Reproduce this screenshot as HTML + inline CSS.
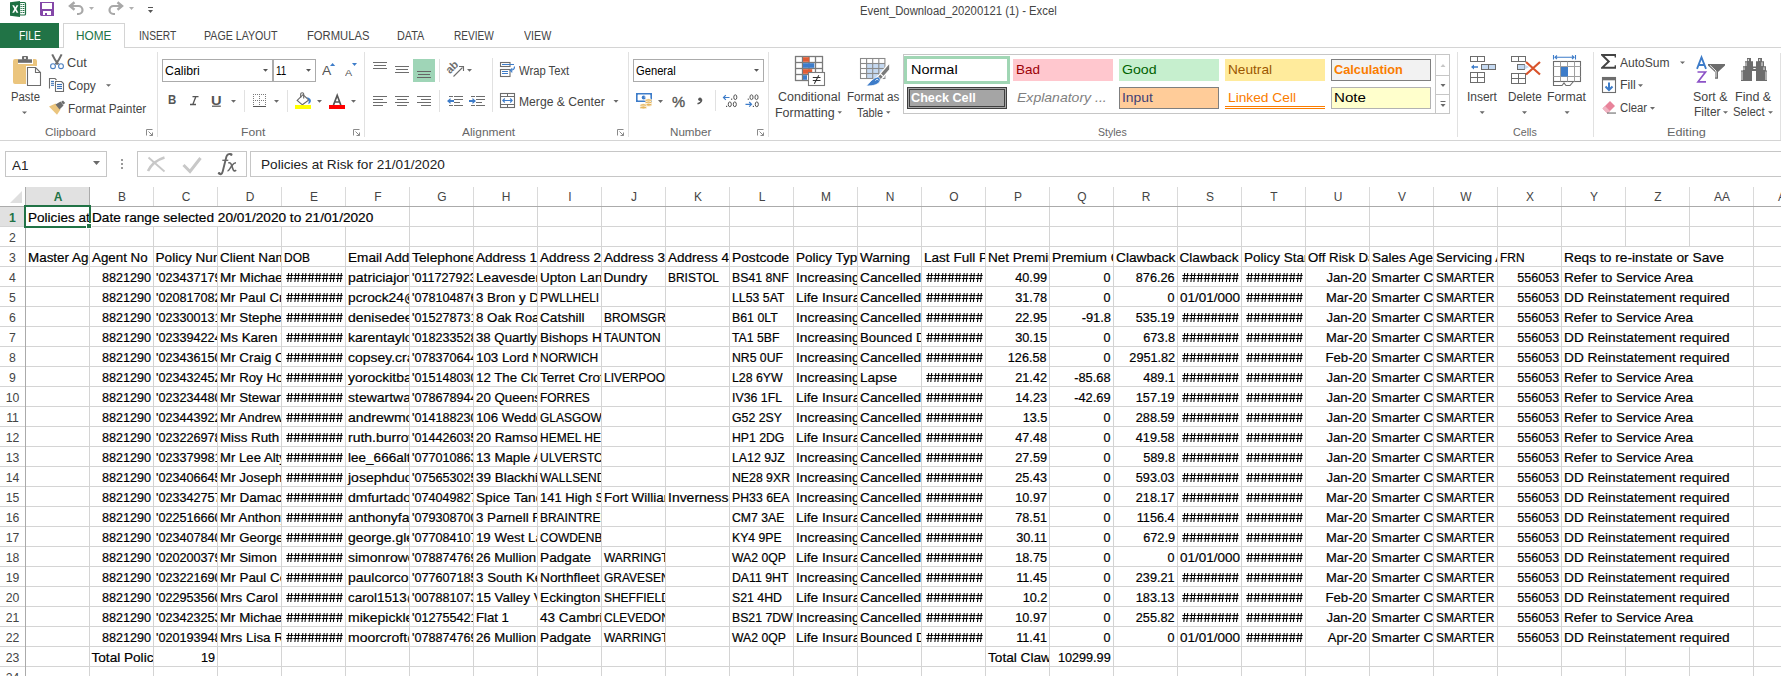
<!DOCTYPE html>
<html><head><meta charset="utf-8"><title>Excel</title><style>
*{margin:0;padding:0;box-sizing:border-box}
html,body{width:1781px;height:676px;overflow:hidden;background:#fff}
body{position:relative;font-family:"Liberation Sans",sans-serif}
.a{position:absolute}
.t{position:absolute;white-space:pre;line-height:1;transform-origin:0 0}
.c{position:absolute;height:19px;overflow:hidden;background:#fff;font-size:13.6px;color:#000;-webkit-text-stroke:0.2px #000}
.r{transform-origin:100% 0}
.hs{letter-spacing:-0.55px}
</style></head>
<body>
<svg class="a" width="0" height="0" style="left:0;top:0"><defs><path id="hh" d="M2.70 6L1.80 15M5.70 6L4.80 15M0.40 8.5H7.00M0.20 11.5H6.50M9.80 6L8.90 15M12.80 6L11.90 15M7.50 8.5H14.10M7.30 11.5H13.60M16.90 6L16.00 15M19.90 6L19.00 15M14.60 8.5H21.20M14.40 11.5H20.70M24.00 6L23.10 15M27.00 6L26.10 15M21.70 8.5H28.30M21.50 11.5H27.80M31.10 6L30.20 15M34.10 6L33.20 15M28.80 8.5H35.40M28.60 11.5H34.90M38.20 6L37.30 15M41.20 6L40.30 15M35.90 8.5H42.50M35.70 11.5H42.00M45.30 6L44.40 15M48.30 6L47.40 15M43.00 8.5H49.60M42.80 11.5H49.10M52.40 6L51.50 15M55.40 6L54.50 15M50.10 8.5H56.70M49.90 11.5H56.20" stroke="#000" stroke-width="1.05" fill="none"/></defs></svg><div class="a" style="left:89px;top:207px;width:1px;height:469px;background:#d4d4d4"></div><div class="a" style="left:153px;top:207px;width:1px;height:469px;background:#d4d4d4"></div><div class="a" style="left:217px;top:207px;width:1px;height:469px;background:#d4d4d4"></div><div class="a" style="left:281px;top:207px;width:1px;height:469px;background:#d4d4d4"></div><div class="a" style="left:345px;top:207px;width:1px;height:469px;background:#d4d4d4"></div><div class="a" style="left:409px;top:207px;width:1px;height:469px;background:#d4d4d4"></div><div class="a" style="left:473px;top:207px;width:1px;height:469px;background:#d4d4d4"></div><div class="a" style="left:537px;top:207px;width:1px;height:469px;background:#d4d4d4"></div><div class="a" style="left:601px;top:207px;width:1px;height:469px;background:#d4d4d4"></div><div class="a" style="left:665px;top:207px;width:1px;height:469px;background:#d4d4d4"></div><div class="a" style="left:729px;top:207px;width:1px;height:469px;background:#d4d4d4"></div><div class="a" style="left:793px;top:207px;width:1px;height:469px;background:#d4d4d4"></div><div class="a" style="left:857px;top:207px;width:1px;height:469px;background:#d4d4d4"></div><div class="a" style="left:921px;top:207px;width:1px;height:469px;background:#d4d4d4"></div><div class="a" style="left:985px;top:207px;width:1px;height:469px;background:#d4d4d4"></div><div class="a" style="left:1049px;top:207px;width:1px;height:469px;background:#d4d4d4"></div><div class="a" style="left:1113px;top:207px;width:1px;height:469px;background:#d4d4d4"></div><div class="a" style="left:1177px;top:207px;width:1px;height:469px;background:#d4d4d4"></div><div class="a" style="left:1241px;top:207px;width:1px;height:469px;background:#d4d4d4"></div><div class="a" style="left:1305px;top:207px;width:1px;height:469px;background:#d4d4d4"></div><div class="a" style="left:1369px;top:207px;width:1px;height:469px;background:#d4d4d4"></div><div class="a" style="left:1433px;top:207px;width:1px;height:469px;background:#d4d4d4"></div><div class="a" style="left:1497px;top:207px;width:1px;height:469px;background:#d4d4d4"></div><div class="a" style="left:1561px;top:207px;width:1px;height:469px;background:#d4d4d4"></div><div class="a" style="left:1625px;top:207px;width:1px;height:469px;background:#d4d4d4"></div><div class="a" style="left:1689px;top:207px;width:1px;height:469px;background:#d4d4d4"></div><div class="a" style="left:1753px;top:207px;width:1px;height:469px;background:#d4d4d4"></div><div class="a" style="left:26px;top:226px;width:1755px;height:1px;background:#d4d4d4"></div><div class="a" style="left:26px;top:246px;width:1755px;height:1px;background:#d4d4d4"></div><div class="a" style="left:26px;top:266px;width:1755px;height:1px;background:#d4d4d4"></div><div class="a" style="left:26px;top:286px;width:1755px;height:1px;background:#d4d4d4"></div><div class="a" style="left:26px;top:306px;width:1755px;height:1px;background:#d4d4d4"></div><div class="a" style="left:26px;top:326px;width:1755px;height:1px;background:#d4d4d4"></div><div class="a" style="left:26px;top:346px;width:1755px;height:1px;background:#d4d4d4"></div><div class="a" style="left:26px;top:366px;width:1755px;height:1px;background:#d4d4d4"></div><div class="a" style="left:26px;top:386px;width:1755px;height:1px;background:#d4d4d4"></div><div class="a" style="left:26px;top:406px;width:1755px;height:1px;background:#d4d4d4"></div><div class="a" style="left:26px;top:426px;width:1755px;height:1px;background:#d4d4d4"></div><div class="a" style="left:26px;top:446px;width:1755px;height:1px;background:#d4d4d4"></div><div class="a" style="left:26px;top:466px;width:1755px;height:1px;background:#d4d4d4"></div><div class="a" style="left:26px;top:486px;width:1755px;height:1px;background:#d4d4d4"></div><div class="a" style="left:26px;top:506px;width:1755px;height:1px;background:#d4d4d4"></div><div class="a" style="left:26px;top:526px;width:1755px;height:1px;background:#d4d4d4"></div><div class="a" style="left:26px;top:546px;width:1755px;height:1px;background:#d4d4d4"></div><div class="a" style="left:26px;top:566px;width:1755px;height:1px;background:#d4d4d4"></div><div class="a" style="left:26px;top:586px;width:1755px;height:1px;background:#d4d4d4"></div><div class="a" style="left:26px;top:606px;width:1755px;height:1px;background:#d4d4d4"></div><div class="a" style="left:26px;top:626px;width:1755px;height:1px;background:#d4d4d4"></div><div class="a" style="left:26px;top:646px;width:1755px;height:1px;background:#d4d4d4"></div><div class="a" style="left:26px;top:666px;width:1755px;height:1px;background:#d4d4d4"></div><div class="a" style="left:26px;top:686px;width:1755px;height:1px;background:#d4d4d4"></div><div class="c" style="left:26px;top:207px;width:63px"><span class="t" style="left:1.5px;top:4.48px;transform:scaleX(0.997)">Policies at Risk for 21/01/2020</span></div><div class="c" style="left:90px;top:207px;width:319px"><span class="t" style="left:1.5px;top:4.48px;transform:scaleX(1.003)">Date range selected 20/01/2020 to 21/01/2020</span></div><div class="c" style="left:26px;top:247px;width:63px"><span class="t" style="left:1.5px;top:4.48px;transform:scaleX(0.987)">Master Agent No</span></div><div class="c" style="left:90px;top:247px;width:63px"><span class="t" style="left:1.5px;top:4.48px;transform:scaleX(0.981)">Agent No</span></div><div class="c" style="left:154px;top:247px;width:63px"><span class="t" style="left:1.5px;top:4.48px;transform:scaleX(1.000)">Policy Number</span></div><div class="c" style="left:218px;top:247px;width:63px"><span class="t" style="left:1.5px;top:4.48px;transform:scaleX(0.993)">Client Name</span></div><div class="c" style="left:282px;top:247px;width:63px"><span class="t" style="left:1.5px;top:4.48px;transform:scaleX(0.880)">DOB</span></div><div class="c" style="left:346px;top:247px;width:63px"><span class="t" style="left:1.5px;top:4.48px;transform:scaleX(1.001)">Email Address</span></div><div class="c" style="left:410px;top:247px;width:63px"><span class="t" style="left:1.5px;top:4.48px;transform:scaleX(1.015)">Telephone</span></div><div class="c" style="left:474px;top:247px;width:63px"><span class="t" style="left:1.5px;top:4.48px;transform:scaleX(0.996)">Address 1</span></div><div class="c" style="left:538px;top:247px;width:63px"><span class="t" style="left:1.5px;top:4.48px;transform:scaleX(0.996)">Address 2</span></div><div class="c" style="left:602px;top:247px;width:63px"><span class="t" style="left:1.5px;top:4.48px;transform:scaleX(0.996)">Address 3</span></div><div class="c" style="left:666px;top:247px;width:63px"><span class="t" style="left:1.5px;top:4.48px;transform:scaleX(0.996)">Address 4</span></div><div class="c" style="left:730px;top:247px;width:63px"><span class="t" style="left:1.5px;top:4.48px;transform:scaleX(1.010)">Postcode</span></div><div class="c" style="left:794px;top:247px;width:63px"><span class="t" style="left:1.5px;top:4.48px;transform:scaleX(0.995)">Policy Type</span></div><div class="c" style="left:858px;top:247px;width:63px"><span class="t" style="left:1.5px;top:4.48px;transform:scaleX(0.996)">Warning</span></div><div class="c" style="left:922px;top:247px;width:63px"><span class="t" style="left:1.5px;top:4.48px;transform:scaleX(0.997)">Last Full Payment</span></div><div class="c" style="left:986px;top:247px;width:63px"><span class="t" style="left:1.5px;top:4.48px;transform:scaleX(0.996)">Net Premium</span></div><div class="c" style="left:1050px;top:247px;width:63px"><span class="t" style="left:1.5px;top:4.48px;transform:scaleX(1.009)">Premium Clawback</span></div><div class="c" style="left:1114px;top:247px;width:63px"><span class="t" style="left:1.5px;top:4.48px;transform:scaleX(1.009)">Clawback</span></div><div class="c" style="left:1178px;top:247px;width:63px"><span class="t" style="left:1.5px;top:4.48px;transform:scaleX(1.000)">Clawback Date</span></div><div class="c" style="left:1242px;top:247px;width:63px"><span class="t" style="left:1.5px;top:4.48px;transform:scaleX(0.992)">Policy Start</span></div><div class="c" style="left:1306px;top:247px;width:63px"><span class="t" style="left:1.5px;top:4.48px;transform:scaleX(0.974)">Off Risk Date</span></div><div class="c" style="left:1370px;top:247px;width:63px"><span class="t" style="left:1.5px;top:4.48px;transform:scaleX(0.995)">Sales Agent</span></div><div class="c" style="left:1434px;top:247px;width:63px"><span class="t" style="left:1.5px;top:4.48px;transform:scaleX(1.004)">Servicing Agent</span></div><div class="c" style="left:1498px;top:247px;width:63px"><span class="t" style="left:1.5px;top:4.48px;transform:scaleX(0.880)">FRN</span></div><div class="c" style="left:1562px;top:247px;width:191px"><span class="t" style="left:1.5px;top:4.48px;transform:scaleX(1.012)">Reqs to re-instate or Save</span></div><div class="c" style="left:90px;top:267px;width:63px"><span class="t r" style="right:2px;top:4.48px;transform:scaleX(0.926)">8821290</span></div><div class="c" style="left:154px;top:267px;width:63px"><span class="t" style="left:1.5px;top:4.48px;transform:scaleX(0.929)">&#x27;023437179</span></div><div class="c" style="left:218px;top:267px;width:63px"><span class="t" style="left:1.5px;top:4.48px;transform:scaleX(0.990)">Mr Michael Jones</span></div><svg class="a" style="left:286px;top:267px" width="59" height="19"><use href="#hh"/></svg><div class="c" style="left:346px;top:267px;width:63px"><span class="t" style="left:1.5px;top:4.48px;transform:scaleX(1.030)">patriciajones@</span></div><div class="c" style="left:410px;top:267px;width:63px"><span class="t" style="left:1.5px;top:4.48px;transform:scaleX(0.929)">&#x27;011727923</span></div><div class="c" style="left:474px;top:267px;width:63px"><span class="t" style="left:1.5px;top:4.48px;transform:scaleX(1.008)">Leavesden Road</span></div><div class="c" style="left:538px;top:267px;width:63px"><span class="t" style="left:1.5px;top:4.48px;transform:scaleX(0.995)">Upton Lane</span></div><div class="c" style="left:602px;top:267px;width:63px"><span class="t" style="left:1.5px;top:4.48px;transform:scaleX(1.000)">Dundry</span></div><div class="c" style="left:666px;top:267px;width:63px"><span class="t" style="left:1.5px;top:4.48px;transform:scaleX(0.880)">BRISTOL</span></div><div class="c" style="left:730px;top:267px;width:63px"><span class="t" style="left:1.5px;top:4.48px;transform:scaleX(0.904)">BS41 8NF</span></div><div class="c" style="left:794px;top:267px;width:63px"><span class="t" style="left:1.5px;top:4.48px;transform:scaleX(1.015)">Increasing Term</span></div><div class="c" style="left:858px;top:267px;width:63px"><span class="t" style="left:1.5px;top:4.48px;transform:scaleX(1.010)">Cancelled</span></div><svg class="a" style="left:926px;top:267px" width="59" height="19"><use href="#hh"/></svg><div class="c" style="left:986px;top:267px;width:63px"><span class="t r" style="right:2px;top:4.48px;transform:scaleX(0.934)">40.99</span></div><div class="c" style="left:1050px;top:267px;width:63px"><span class="t r" style="right:2px;top:4.48px;transform:scaleX(0.926)">0</span></div><div class="c" style="left:1114px;top:267px;width:63px"><span class="t r" style="right:2px;top:4.48px;transform:scaleX(0.933)">876.26</span></div><svg class="a" style="left:1182px;top:267px" width="59" height="19"><use href="#hh"/></svg><svg class="a" style="left:1246px;top:267px" width="59" height="19"><use href="#hh"/></svg><div class="c" style="left:1306px;top:267px;width:63px"><span class="t r" style="right:2px;top:4.48px;transform:scaleX(0.966)">Jan-20</span></div><div class="c" style="left:1370px;top:267px;width:63px"><span class="t" style="left:1.5px;top:4.48px;transform:scaleX(1.000)">Smarter Cover</span></div><div class="c" style="left:1434px;top:267px;width:63px"><span class="t" style="left:1.5px;top:4.48px;transform:scaleX(0.880)">SMARTER</span></div><div class="c" style="left:1498px;top:267px;width:63px"><span class="t r" style="right:2px;top:4.48px;transform:scaleX(0.926)">556053</span></div><div class="c" style="left:1562px;top:267px;width:191px"><span class="t" style="left:1.5px;top:4.48px;transform:scaleX(0.999)">Refer to Service Area</span></div><div class="c" style="left:90px;top:287px;width:63px"><span class="t r" style="right:2px;top:4.48px;transform:scaleX(0.926)">8821290</span></div><div class="c" style="left:154px;top:287px;width:63px"><span class="t" style="left:1.5px;top:4.48px;transform:scaleX(0.929)">&#x27;020817082</span></div><div class="c" style="left:218px;top:287px;width:63px"><span class="t" style="left:1.5px;top:4.48px;transform:scaleX(0.978)">Mr Paul Crock</span></div><svg class="a" style="left:286px;top:287px" width="59" height="19"><use href="#hh"/></svg><div class="c" style="left:346px;top:287px;width:63px"><span class="t" style="left:1.5px;top:4.48px;transform:scaleX(1.014)">pcrock24@gmail</span></div><div class="c" style="left:410px;top:287px;width:63px"><span class="t" style="left:1.5px;top:4.48px;transform:scaleX(0.929)">&#x27;078104876</span></div><div class="c" style="left:474px;top:287px;width:63px"><span class="t" style="left:1.5px;top:4.48px;transform:scaleX(0.981)">3 Bron y Dre</span></div><div class="c" style="left:538px;top:287px;width:63px"><span class="t" style="left:1.5px;top:4.48px;transform:scaleX(0.880)">PWLLHELI</span></div><div class="c" style="left:730px;top:287px;width:63px"><span class="t" style="left:1.5px;top:4.48px;transform:scaleX(0.905)">LL53 5AT</span></div><div class="c" style="left:794px;top:287px;width:63px"><span class="t" style="left:1.5px;top:4.48px;transform:scaleX(1.013)">Life Insurance</span></div><div class="c" style="left:858px;top:287px;width:63px"><span class="t" style="left:1.5px;top:4.48px;transform:scaleX(1.010)">Cancelled</span></div><svg class="a" style="left:926px;top:287px" width="59" height="19"><use href="#hh"/></svg><div class="c" style="left:986px;top:287px;width:63px"><span class="t r" style="right:2px;top:4.48px;transform:scaleX(0.934)">31.78</span></div><div class="c" style="left:1050px;top:287px;width:63px"><span class="t r" style="right:2px;top:4.48px;transform:scaleX(0.926)">0</span></div><div class="c" style="left:1114px;top:287px;width:63px"><span class="t r" style="right:2px;top:4.48px;transform:scaleX(0.926)">0</span></div><div class="c" style="left:1178px;top:287px;width:63px"><span class="t" style="left:1.5px;top:4.48px;transform:scaleX(0.991)">01/01/000</span></div><svg class="a" style="left:1246px;top:287px" width="59" height="19"><use href="#hh"/></svg><div class="c" style="left:1306px;top:287px;width:63px"><span class="t r" style="right:2px;top:4.48px;transform:scaleX(0.952)">Mar-20</span></div><div class="c" style="left:1370px;top:287px;width:63px"><span class="t" style="left:1.5px;top:4.48px;transform:scaleX(1.000)">Smarter Cover</span></div><div class="c" style="left:1434px;top:287px;width:63px"><span class="t" style="left:1.5px;top:4.48px;transform:scaleX(0.880)">SMARTER</span></div><div class="c" style="left:1498px;top:287px;width:63px"><span class="t r" style="right:2px;top:4.48px;transform:scaleX(0.926)">556053</span></div><div class="c" style="left:1562px;top:287px;width:191px"><span class="t" style="left:1.5px;top:4.48px;transform:scaleX(1.006)">DD Reinstatement required</span></div><div class="c" style="left:90px;top:307px;width:63px"><span class="t r" style="right:2px;top:4.48px;transform:scaleX(0.926)">8821290</span></div><div class="c" style="left:154px;top:307px;width:63px"><span class="t" style="left:1.5px;top:4.48px;transform:scaleX(0.929)">&#x27;023300131</span></div><div class="c" style="left:218px;top:307px;width:63px"><span class="t" style="left:1.5px;top:4.48px;transform:scaleX(0.985)">Mr Stephen Dee</span></div><svg class="a" style="left:286px;top:307px" width="59" height="19"><use href="#hh"/></svg><div class="c" style="left:346px;top:307px;width:63px"><span class="t" style="left:1.5px;top:4.48px;transform:scaleX(1.029)">denisedee@</span></div><div class="c" style="left:410px;top:307px;width:63px"><span class="t" style="left:1.5px;top:4.48px;transform:scaleX(0.929)">&#x27;015278731</span></div><div class="c" style="left:474px;top:307px;width:63px"><span class="t" style="left:1.5px;top:4.48px;transform:scaleX(0.976)">8 Oak Road</span></div><div class="c" style="left:538px;top:307px;width:63px"><span class="t" style="left:1.5px;top:4.48px;transform:scaleX(1.001)">Catshill</span></div><div class="c" style="left:602px;top:307px;width:63px"><span class="t" style="left:1.5px;top:4.48px;transform:scaleX(0.880)">BROMSGROVE</span></div><div class="c" style="left:730px;top:307px;width:63px"><span class="t" style="left:1.5px;top:4.48px;transform:scaleX(0.909)">B61 0LT</span></div><div class="c" style="left:794px;top:307px;width:63px"><span class="t" style="left:1.5px;top:4.48px;transform:scaleX(1.015)">Increasing Term</span></div><div class="c" style="left:858px;top:307px;width:63px"><span class="t" style="left:1.5px;top:4.48px;transform:scaleX(1.010)">Cancelled</span></div><svg class="a" style="left:926px;top:307px" width="59" height="19"><use href="#hh"/></svg><div class="c" style="left:986px;top:307px;width:63px"><span class="t r" style="right:2px;top:4.48px;transform:scaleX(0.934)">22.95</span></div><div class="c" style="left:1050px;top:307px;width:63px"><span class="t r" style="right:2px;top:4.48px;transform:scaleX(0.946)">-91.8</span></div><div class="c" style="left:1114px;top:307px;width:63px"><span class="t r" style="right:2px;top:4.48px;transform:scaleX(0.933)">535.19</span></div><svg class="a" style="left:1182px;top:307px" width="59" height="19"><use href="#hh"/></svg><svg class="a" style="left:1246px;top:307px" width="59" height="19"><use href="#hh"/></svg><div class="c" style="left:1306px;top:307px;width:63px"><span class="t r" style="right:2px;top:4.48px;transform:scaleX(0.966)">Jan-20</span></div><div class="c" style="left:1370px;top:307px;width:63px"><span class="t" style="left:1.5px;top:4.48px;transform:scaleX(1.000)">Smarter Cover</span></div><div class="c" style="left:1434px;top:307px;width:63px"><span class="t" style="left:1.5px;top:4.48px;transform:scaleX(0.880)">SMARTER</span></div><div class="c" style="left:1498px;top:307px;width:63px"><span class="t r" style="right:2px;top:4.48px;transform:scaleX(0.926)">556053</span></div><div class="c" style="left:1562px;top:307px;width:191px"><span class="t" style="left:1.5px;top:4.48px;transform:scaleX(0.999)">Refer to Service Area</span></div><div class="c" style="left:90px;top:327px;width:63px"><span class="t r" style="right:2px;top:4.48px;transform:scaleX(0.926)">8821290</span></div><div class="c" style="left:154px;top:327px;width:63px"><span class="t" style="left:1.5px;top:4.48px;transform:scaleX(0.929)">&#x27;023394224</span></div><div class="c" style="left:218px;top:327px;width:63px"><span class="t" style="left:1.5px;top:4.48px;transform:scaleX(0.988)">Ms Karen Taylor</span></div><svg class="a" style="left:286px;top:327px" width="59" height="19"><use href="#hh"/></svg><div class="c" style="left:346px;top:327px;width:63px"><span class="t" style="left:1.5px;top:4.48px;transform:scaleX(1.029)">karentaylor@</span></div><div class="c" style="left:410px;top:327px;width:63px"><span class="t" style="left:1.5px;top:4.48px;transform:scaleX(0.929)">&#x27;018233528</span></div><div class="c" style="left:474px;top:327px;width:63px"><span class="t" style="left:1.5px;top:4.48px;transform:scaleX(0.972)">38 Quartly Dr</span></div><div class="c" style="left:538px;top:327px;width:63px"><span class="t" style="left:1.5px;top:4.48px;transform:scaleX(0.995)">Bishops Hull</span></div><div class="c" style="left:602px;top:327px;width:63px"><span class="t" style="left:1.5px;top:4.48px;transform:scaleX(0.880)">TAUNTON</span></div><div class="c" style="left:730px;top:327px;width:63px"><span class="t" style="left:1.5px;top:4.48px;transform:scaleX(0.901)">TA1 5BF</span></div><div class="c" style="left:794px;top:327px;width:63px"><span class="t" style="left:1.5px;top:4.48px;transform:scaleX(1.015)">Increasing Term</span></div><div class="c" style="left:858px;top:327px;width:63px"><span class="t" style="left:1.5px;top:4.48px;transform:scaleX(0.976)">Bounced DD</span></div><svg class="a" style="left:926px;top:327px" width="59" height="19"><use href="#hh"/></svg><div class="c" style="left:986px;top:327px;width:63px"><span class="t r" style="right:2px;top:4.48px;transform:scaleX(0.934)">30.15</span></div><div class="c" style="left:1050px;top:327px;width:63px"><span class="t r" style="right:2px;top:4.48px;transform:scaleX(0.926)">0</span></div><div class="c" style="left:1114px;top:327px;width:63px"><span class="t r" style="right:2px;top:4.48px;transform:scaleX(0.934)">673.8</span></div><svg class="a" style="left:1182px;top:327px" width="59" height="19"><use href="#hh"/></svg><svg class="a" style="left:1246px;top:327px" width="59" height="19"><use href="#hh"/></svg><div class="c" style="left:1306px;top:327px;width:63px"><span class="t r" style="right:2px;top:4.48px;transform:scaleX(0.952)">Mar-20</span></div><div class="c" style="left:1370px;top:327px;width:63px"><span class="t" style="left:1.5px;top:4.48px;transform:scaleX(1.000)">Smarter Cover</span></div><div class="c" style="left:1434px;top:327px;width:63px"><span class="t" style="left:1.5px;top:4.48px;transform:scaleX(0.880)">SMARTER</span></div><div class="c" style="left:1498px;top:327px;width:63px"><span class="t r" style="right:2px;top:4.48px;transform:scaleX(0.926)">556053</span></div><div class="c" style="left:1562px;top:327px;width:191px"><span class="t" style="left:1.5px;top:4.48px;transform:scaleX(1.006)">DD Reinstatement required</span></div><div class="c" style="left:90px;top:347px;width:63px"><span class="t r" style="right:2px;top:4.48px;transform:scaleX(0.926)">8821290</span></div><div class="c" style="left:154px;top:347px;width:63px"><span class="t" style="left:1.5px;top:4.48px;transform:scaleX(0.929)">&#x27;023436150</span></div><div class="c" style="left:218px;top:347px;width:63px"><span class="t" style="left:1.5px;top:4.48px;transform:scaleX(0.985)">Mr Craig Copsey</span></div><svg class="a" style="left:286px;top:347px" width="59" height="19"><use href="#hh"/></svg><div class="c" style="left:346px;top:347px;width:63px"><span class="t" style="left:1.5px;top:4.48px;transform:scaleX(1.028)">copsey.craig@</span></div><div class="c" style="left:410px;top:347px;width:63px"><span class="t" style="left:1.5px;top:4.48px;transform:scaleX(0.929)">&#x27;078370644</span></div><div class="c" style="left:474px;top:347px;width:63px"><span class="t" style="left:1.5px;top:4.48px;transform:scaleX(0.981)">103 Lord Nelson</span></div><div class="c" style="left:538px;top:347px;width:63px"><span class="t" style="left:1.5px;top:4.48px;transform:scaleX(0.880)">NORWICH</span></div><div class="c" style="left:730px;top:347px;width:63px"><span class="t" style="left:1.5px;top:4.48px;transform:scaleX(0.900)">NR5 0UF</span></div><div class="c" style="left:794px;top:347px;width:63px"><span class="t" style="left:1.5px;top:4.48px;transform:scaleX(1.015)">Increasing Term</span></div><div class="c" style="left:858px;top:347px;width:63px"><span class="t" style="left:1.5px;top:4.48px;transform:scaleX(1.010)">Cancelled</span></div><svg class="a" style="left:926px;top:347px" width="59" height="19"><use href="#hh"/></svg><div class="c" style="left:986px;top:347px;width:63px"><span class="t r" style="right:2px;top:4.48px;transform:scaleX(0.933)">126.58</span></div><div class="c" style="left:1050px;top:347px;width:63px"><span class="t r" style="right:2px;top:4.48px;transform:scaleX(0.926)">0</span></div><div class="c" style="left:1114px;top:347px;width:63px"><span class="t r" style="right:2px;top:4.48px;transform:scaleX(0.932)">2951.82</span></div><svg class="a" style="left:1182px;top:347px" width="59" height="19"><use href="#hh"/></svg><svg class="a" style="left:1246px;top:347px" width="59" height="19"><use href="#hh"/></svg><div class="c" style="left:1306px;top:347px;width:63px"><span class="t r" style="right:2px;top:4.48px;transform:scaleX(0.963)">Feb-20</span></div><div class="c" style="left:1370px;top:347px;width:63px"><span class="t" style="left:1.5px;top:4.48px;transform:scaleX(1.000)">Smarter Cover</span></div><div class="c" style="left:1434px;top:347px;width:63px"><span class="t" style="left:1.5px;top:4.48px;transform:scaleX(0.880)">SMARTER</span></div><div class="c" style="left:1498px;top:347px;width:63px"><span class="t r" style="right:2px;top:4.48px;transform:scaleX(0.926)">556053</span></div><div class="c" style="left:1562px;top:347px;width:191px"><span class="t" style="left:1.5px;top:4.48px;transform:scaleX(1.006)">DD Reinstatement required</span></div><div class="c" style="left:90px;top:367px;width:63px"><span class="t r" style="right:2px;top:4.48px;transform:scaleX(0.926)">8821290</span></div><div class="c" style="left:154px;top:367px;width:63px"><span class="t" style="left:1.5px;top:4.48px;transform:scaleX(0.929)">&#x27;023432452</span></div><div class="c" style="left:218px;top:367px;width:63px"><span class="t" style="left:1.5px;top:4.48px;transform:scaleX(0.976)">Mr Roy Hockit</span></div><svg class="a" style="left:286px;top:367px" width="59" height="19"><use href="#hh"/></svg><div class="c" style="left:346px;top:367px;width:63px"><span class="t" style="left:1.5px;top:4.48px;transform:scaleX(1.030)">yorockitbaby@</span></div><div class="c" style="left:410px;top:367px;width:63px"><span class="t" style="left:1.5px;top:4.48px;transform:scaleX(0.929)">&#x27;015148030</span></div><div class="c" style="left:474px;top:367px;width:63px"><span class="t" style="left:1.5px;top:4.48px;transform:scaleX(0.977)">12 The Close</span></div><div class="c" style="left:538px;top:367px;width:63px"><span class="t" style="left:1.5px;top:4.48px;transform:scaleX(0.993)">Terret Croft</span></div><div class="c" style="left:602px;top:367px;width:63px"><span class="t" style="left:1.5px;top:4.48px;transform:scaleX(0.880)">LIVERPOOL</span></div><div class="c" style="left:730px;top:367px;width:63px"><span class="t" style="left:1.5px;top:4.48px;transform:scaleX(0.907)">L28 6YW</span></div><div class="c" style="left:794px;top:367px;width:63px"><span class="t" style="left:1.5px;top:4.48px;transform:scaleX(1.015)">Increasing Term</span></div><div class="c" style="left:858px;top:367px;width:63px"><span class="t" style="left:1.5px;top:4.48px;transform:scaleX(1.003)">Lapse</span></div><svg class="a" style="left:926px;top:367px" width="59" height="19"><use href="#hh"/></svg><div class="c" style="left:986px;top:367px;width:63px"><span class="t r" style="right:2px;top:4.48px;transform:scaleX(0.934)">21.42</span></div><div class="c" style="left:1050px;top:367px;width:63px"><span class="t r" style="right:2px;top:4.48px;transform:scaleX(0.942)">-85.68</span></div><div class="c" style="left:1114px;top:367px;width:63px"><span class="t r" style="right:2px;top:4.48px;transform:scaleX(0.934)">489.1</span></div><svg class="a" style="left:1182px;top:367px" width="59" height="19"><use href="#hh"/></svg><svg class="a" style="left:1246px;top:367px" width="59" height="19"><use href="#hh"/></svg><div class="c" style="left:1306px;top:367px;width:63px"><span class="t r" style="right:2px;top:4.48px;transform:scaleX(0.966)">Jan-20</span></div><div class="c" style="left:1370px;top:367px;width:63px"><span class="t" style="left:1.5px;top:4.48px;transform:scaleX(1.000)">Smarter Cover</span></div><div class="c" style="left:1434px;top:367px;width:63px"><span class="t" style="left:1.5px;top:4.48px;transform:scaleX(0.880)">SMARTER</span></div><div class="c" style="left:1498px;top:367px;width:63px"><span class="t r" style="right:2px;top:4.48px;transform:scaleX(0.926)">556053</span></div><div class="c" style="left:1562px;top:367px;width:191px"><span class="t" style="left:1.5px;top:4.48px;transform:scaleX(0.999)">Refer to Service Area</span></div><div class="c" style="left:90px;top:387px;width:63px"><span class="t r" style="right:2px;top:4.48px;transform:scaleX(0.926)">8821290</span></div><div class="c" style="left:154px;top:387px;width:63px"><span class="t" style="left:1.5px;top:4.48px;transform:scaleX(0.929)">&#x27;023234480</span></div><div class="c" style="left:218px;top:387px;width:63px"><span class="t" style="left:1.5px;top:4.48px;transform:scaleX(0.979)">Mr Stewart Watt</span></div><svg class="a" style="left:286px;top:387px" width="59" height="19"><use href="#hh"/></svg><div class="c" style="left:346px;top:387px;width:63px"><span class="t" style="left:1.5px;top:4.48px;transform:scaleX(1.029)">stewartwatt@</span></div><div class="c" style="left:410px;top:387px;width:63px"><span class="t" style="left:1.5px;top:4.48px;transform:scaleX(0.929)">&#x27;078678944</span></div><div class="c" style="left:474px;top:387px;width:63px"><span class="t" style="left:1.5px;top:4.48px;transform:scaleX(0.977)">20 Queens Rd</span></div><div class="c" style="left:538px;top:387px;width:63px"><span class="t" style="left:1.5px;top:4.48px;transform:scaleX(0.880)">FORRES</span></div><div class="c" style="left:730px;top:387px;width:63px"><span class="t" style="left:1.5px;top:4.48px;transform:scaleX(0.907)">IV36 1FL</span></div><div class="c" style="left:794px;top:387px;width:63px"><span class="t" style="left:1.5px;top:4.48px;transform:scaleX(1.013)">Life Insurance</span></div><div class="c" style="left:858px;top:387px;width:63px"><span class="t" style="left:1.5px;top:4.48px;transform:scaleX(1.010)">Cancelled</span></div><svg class="a" style="left:926px;top:387px" width="59" height="19"><use href="#hh"/></svg><div class="c" style="left:986px;top:387px;width:63px"><span class="t r" style="right:2px;top:4.48px;transform:scaleX(0.934)">14.23</span></div><div class="c" style="left:1050px;top:387px;width:63px"><span class="t r" style="right:2px;top:4.48px;transform:scaleX(0.942)">-42.69</span></div><div class="c" style="left:1114px;top:387px;width:63px"><span class="t r" style="right:2px;top:4.48px;transform:scaleX(0.933)">157.19</span></div><svg class="a" style="left:1182px;top:387px" width="59" height="19"><use href="#hh"/></svg><svg class="a" style="left:1246px;top:387px" width="59" height="19"><use href="#hh"/></svg><div class="c" style="left:1306px;top:387px;width:63px"><span class="t r" style="right:2px;top:4.48px;transform:scaleX(0.966)">Jan-20</span></div><div class="c" style="left:1370px;top:387px;width:63px"><span class="t" style="left:1.5px;top:4.48px;transform:scaleX(1.000)">Smarter Cover</span></div><div class="c" style="left:1434px;top:387px;width:63px"><span class="t" style="left:1.5px;top:4.48px;transform:scaleX(0.880)">SMARTER</span></div><div class="c" style="left:1498px;top:387px;width:63px"><span class="t r" style="right:2px;top:4.48px;transform:scaleX(0.926)">556053</span></div><div class="c" style="left:1562px;top:387px;width:191px"><span class="t" style="left:1.5px;top:4.48px;transform:scaleX(0.999)">Refer to Service Area</span></div><div class="c" style="left:90px;top:407px;width:63px"><span class="t r" style="right:2px;top:4.48px;transform:scaleX(0.926)">8821290</span></div><div class="c" style="left:154px;top:407px;width:63px"><span class="t" style="left:1.5px;top:4.48px;transform:scaleX(0.929)">&#x27;023443922</span></div><div class="c" style="left:218px;top:407px;width:63px"><span class="t" style="left:1.5px;top:4.48px;transform:scaleX(0.976)">Mr Andrew Mc</span></div><svg class="a" style="left:286px;top:407px" width="59" height="19"><use href="#hh"/></svg><div class="c" style="left:346px;top:407px;width:63px"><span class="t" style="left:1.5px;top:4.48px;transform:scaleX(1.029)">andrewmcl@</span></div><div class="c" style="left:410px;top:407px;width:63px"><span class="t" style="left:1.5px;top:4.48px;transform:scaleX(0.929)">&#x27;014188230</span></div><div class="c" style="left:474px;top:407px;width:63px"><span class="t" style="left:1.5px;top:4.48px;transform:scaleX(0.974)">106 Weddell</span></div><div class="c" style="left:538px;top:407px;width:63px"><span class="t" style="left:1.5px;top:4.48px;transform:scaleX(0.880)">GLASGOW</span></div><div class="c" style="left:730px;top:407px;width:63px"><span class="t" style="left:1.5px;top:4.48px;transform:scaleX(0.907)">G52 2SY</span></div><div class="c" style="left:794px;top:407px;width:63px"><span class="t" style="left:1.5px;top:4.48px;transform:scaleX(1.015)">Increasing Term</span></div><div class="c" style="left:858px;top:407px;width:63px"><span class="t" style="left:1.5px;top:4.48px;transform:scaleX(1.010)">Cancelled</span></div><svg class="a" style="left:926px;top:407px" width="59" height="19"><use href="#hh"/></svg><div class="c" style="left:986px;top:407px;width:63px"><span class="t r" style="right:2px;top:4.48px;transform:scaleX(0.937)">13.5</span></div><div class="c" style="left:1050px;top:407px;width:63px"><span class="t r" style="right:2px;top:4.48px;transform:scaleX(0.926)">0</span></div><div class="c" style="left:1114px;top:407px;width:63px"><span class="t r" style="right:2px;top:4.48px;transform:scaleX(0.933)">288.59</span></div><svg class="a" style="left:1182px;top:407px" width="59" height="19"><use href="#hh"/></svg><svg class="a" style="left:1246px;top:407px" width="59" height="19"><use href="#hh"/></svg><div class="c" style="left:1306px;top:407px;width:63px"><span class="t r" style="right:2px;top:4.48px;transform:scaleX(0.966)">Jan-20</span></div><div class="c" style="left:1370px;top:407px;width:63px"><span class="t" style="left:1.5px;top:4.48px;transform:scaleX(1.000)">Smarter Cover</span></div><div class="c" style="left:1434px;top:407px;width:63px"><span class="t" style="left:1.5px;top:4.48px;transform:scaleX(0.880)">SMARTER</span></div><div class="c" style="left:1498px;top:407px;width:63px"><span class="t r" style="right:2px;top:4.48px;transform:scaleX(0.926)">556053</span></div><div class="c" style="left:1562px;top:407px;width:191px"><span class="t" style="left:1.5px;top:4.48px;transform:scaleX(0.999)">Refer to Service Area</span></div><div class="c" style="left:90px;top:427px;width:63px"><span class="t r" style="right:2px;top:4.48px;transform:scaleX(0.926)">8821290</span></div><div class="c" style="left:154px;top:427px;width:63px"><span class="t" style="left:1.5px;top:4.48px;transform:scaleX(0.929)">&#x27;023226978</span></div><div class="c" style="left:218px;top:427px;width:63px"><span class="t" style="left:1.5px;top:4.48px;transform:scaleX(0.980)">Miss Ruth Burr</span></div><svg class="a" style="left:286px;top:427px" width="59" height="19"><use href="#hh"/></svg><div class="c" style="left:346px;top:427px;width:63px"><span class="t" style="left:1.5px;top:4.48px;transform:scaleX(1.028)">ruth.burrows@</span></div><div class="c" style="left:410px;top:427px;width:63px"><span class="t" style="left:1.5px;top:4.48px;transform:scaleX(0.929)">&#x27;014426035</span></div><div class="c" style="left:474px;top:427px;width:63px"><span class="t" style="left:1.5px;top:4.48px;transform:scaleX(0.994)">20 Ramsome</span></div><div class="c" style="left:538px;top:427px;width:63px"><span class="t" style="left:1.5px;top:4.48px;transform:scaleX(0.883)">HEMEL HEMPSTEAD</span></div><div class="c" style="left:730px;top:427px;width:63px"><span class="t" style="left:1.5px;top:4.48px;transform:scaleX(0.900)">HP1 2DG</span></div><div class="c" style="left:794px;top:427px;width:63px"><span class="t" style="left:1.5px;top:4.48px;transform:scaleX(1.013)">Life Insurance</span></div><div class="c" style="left:858px;top:427px;width:63px"><span class="t" style="left:1.5px;top:4.48px;transform:scaleX(1.010)">Cancelled</span></div><svg class="a" style="left:926px;top:427px" width="59" height="19"><use href="#hh"/></svg><div class="c" style="left:986px;top:427px;width:63px"><span class="t r" style="right:2px;top:4.48px;transform:scaleX(0.934)">47.48</span></div><div class="c" style="left:1050px;top:427px;width:63px"><span class="t r" style="right:2px;top:4.48px;transform:scaleX(0.926)">0</span></div><div class="c" style="left:1114px;top:427px;width:63px"><span class="t r" style="right:2px;top:4.48px;transform:scaleX(0.933)">419.58</span></div><svg class="a" style="left:1182px;top:427px" width="59" height="19"><use href="#hh"/></svg><svg class="a" style="left:1246px;top:427px" width="59" height="19"><use href="#hh"/></svg><div class="c" style="left:1306px;top:427px;width:63px"><span class="t r" style="right:2px;top:4.48px;transform:scaleX(0.966)">Jan-20</span></div><div class="c" style="left:1370px;top:427px;width:63px"><span class="t" style="left:1.5px;top:4.48px;transform:scaleX(1.000)">Smarter Cover</span></div><div class="c" style="left:1434px;top:427px;width:63px"><span class="t" style="left:1.5px;top:4.48px;transform:scaleX(0.880)">SMARTER</span></div><div class="c" style="left:1498px;top:427px;width:63px"><span class="t r" style="right:2px;top:4.48px;transform:scaleX(0.926)">556053</span></div><div class="c" style="left:1562px;top:427px;width:191px"><span class="t" style="left:1.5px;top:4.48px;transform:scaleX(0.999)">Refer to Service Area</span></div><div class="c" style="left:90px;top:447px;width:63px"><span class="t r" style="right:2px;top:4.48px;transform:scaleX(0.926)">8821290</span></div><div class="c" style="left:154px;top:447px;width:63px"><span class="t" style="left:1.5px;top:4.48px;transform:scaleX(0.929)">&#x27;023379981</span></div><div class="c" style="left:218px;top:447px;width:63px"><span class="t" style="left:1.5px;top:4.48px;transform:scaleX(0.968)">Mr Lee Alty</span></div><svg class="a" style="left:286px;top:447px" width="59" height="19"><use href="#hh"/></svg><div class="c" style="left:346px;top:447px;width:63px"><span class="t" style="left:1.5px;top:4.48px;transform:scaleX(0.996)">lee_666alty@</span></div><div class="c" style="left:410px;top:447px;width:63px"><span class="t" style="left:1.5px;top:4.48px;transform:scaleX(0.929)">&#x27;077010863</span></div><div class="c" style="left:474px;top:447px;width:63px"><span class="t" style="left:1.5px;top:4.48px;transform:scaleX(0.974)">13 Maple Ave</span></div><div class="c" style="left:538px;top:447px;width:63px"><span class="t" style="left:1.5px;top:4.48px;transform:scaleX(0.880)">ULVERSTON</span></div><div class="c" style="left:730px;top:447px;width:63px"><span class="t" style="left:1.5px;top:4.48px;transform:scaleX(0.906)">LA12 9JZ</span></div><div class="c" style="left:794px;top:447px;width:63px"><span class="t" style="left:1.5px;top:4.48px;transform:scaleX(1.015)">Increasing Term</span></div><div class="c" style="left:858px;top:447px;width:63px"><span class="t" style="left:1.5px;top:4.48px;transform:scaleX(1.010)">Cancelled</span></div><svg class="a" style="left:926px;top:447px" width="59" height="19"><use href="#hh"/></svg><div class="c" style="left:986px;top:447px;width:63px"><span class="t r" style="right:2px;top:4.48px;transform:scaleX(0.934)">27.59</span></div><div class="c" style="left:1050px;top:447px;width:63px"><span class="t r" style="right:2px;top:4.48px;transform:scaleX(0.926)">0</span></div><div class="c" style="left:1114px;top:447px;width:63px"><span class="t r" style="right:2px;top:4.48px;transform:scaleX(0.934)">589.8</span></div><svg class="a" style="left:1182px;top:447px" width="59" height="19"><use href="#hh"/></svg><svg class="a" style="left:1246px;top:447px" width="59" height="19"><use href="#hh"/></svg><div class="c" style="left:1306px;top:447px;width:63px"><span class="t r" style="right:2px;top:4.48px;transform:scaleX(0.966)">Jan-20</span></div><div class="c" style="left:1370px;top:447px;width:63px"><span class="t" style="left:1.5px;top:4.48px;transform:scaleX(1.000)">Smarter Cover</span></div><div class="c" style="left:1434px;top:447px;width:63px"><span class="t" style="left:1.5px;top:4.48px;transform:scaleX(0.880)">SMARTER</span></div><div class="c" style="left:1498px;top:447px;width:63px"><span class="t r" style="right:2px;top:4.48px;transform:scaleX(0.926)">556053</span></div><div class="c" style="left:1562px;top:447px;width:191px"><span class="t" style="left:1.5px;top:4.48px;transform:scaleX(0.999)">Refer to Service Area</span></div><div class="c" style="left:90px;top:467px;width:63px"><span class="t r" style="right:2px;top:4.48px;transform:scaleX(0.926)">8821290</span></div><div class="c" style="left:154px;top:467px;width:63px"><span class="t" style="left:1.5px;top:4.48px;transform:scaleX(0.929)">&#x27;023406645</span></div><div class="c" style="left:218px;top:467px;width:63px"><span class="t" style="left:1.5px;top:4.48px;transform:scaleX(0.985)">Mr Joseph Dud</span></div><svg class="a" style="left:286px;top:467px" width="59" height="19"><use href="#hh"/></svg><div class="c" style="left:346px;top:467px;width:63px"><span class="t" style="left:1.5px;top:4.48px;transform:scaleX(1.030)">josephdudley@</span></div><div class="c" style="left:410px;top:467px;width:63px"><span class="t" style="left:1.5px;top:4.48px;transform:scaleX(0.929)">&#x27;075653025</span></div><div class="c" style="left:474px;top:467px;width:63px"><span class="t" style="left:1.5px;top:4.48px;transform:scaleX(0.989)">39 Blackhill</span></div><div class="c" style="left:538px;top:467px;width:63px"><span class="t" style="left:1.5px;top:4.48px;transform:scaleX(0.880)">WALLSEND</span></div><div class="c" style="left:730px;top:467px;width:63px"><span class="t" style="left:1.5px;top:4.48px;transform:scaleX(0.903)">NE28 9XR</span></div><div class="c" style="left:794px;top:467px;width:63px"><span class="t" style="left:1.5px;top:4.48px;transform:scaleX(1.015)">Increasing Term</span></div><div class="c" style="left:858px;top:467px;width:63px"><span class="t" style="left:1.5px;top:4.48px;transform:scaleX(1.010)">Cancelled</span></div><svg class="a" style="left:926px;top:467px" width="59" height="19"><use href="#hh"/></svg><div class="c" style="left:986px;top:467px;width:63px"><span class="t r" style="right:2px;top:4.48px;transform:scaleX(0.934)">25.43</span></div><div class="c" style="left:1050px;top:467px;width:63px"><span class="t r" style="right:2px;top:4.48px;transform:scaleX(0.926)">0</span></div><div class="c" style="left:1114px;top:467px;width:63px"><span class="t r" style="right:2px;top:4.48px;transform:scaleX(0.933)">593.03</span></div><svg class="a" style="left:1182px;top:467px" width="59" height="19"><use href="#hh"/></svg><svg class="a" style="left:1246px;top:467px" width="59" height="19"><use href="#hh"/></svg><div class="c" style="left:1306px;top:467px;width:63px"><span class="t r" style="right:2px;top:4.48px;transform:scaleX(0.966)">Jan-20</span></div><div class="c" style="left:1370px;top:467px;width:63px"><span class="t" style="left:1.5px;top:4.48px;transform:scaleX(1.000)">Smarter Cover</span></div><div class="c" style="left:1434px;top:467px;width:63px"><span class="t" style="left:1.5px;top:4.48px;transform:scaleX(0.880)">SMARTER</span></div><div class="c" style="left:1498px;top:467px;width:63px"><span class="t r" style="right:2px;top:4.48px;transform:scaleX(0.926)">556053</span></div><div class="c" style="left:1562px;top:467px;width:191px"><span class="t" style="left:1.5px;top:4.48px;transform:scaleX(1.006)">DD Reinstatement required</span></div><div class="c" style="left:90px;top:487px;width:63px"><span class="t r" style="right:2px;top:4.48px;transform:scaleX(0.926)">8821290</span></div><div class="c" style="left:154px;top:487px;width:63px"><span class="t" style="left:1.5px;top:4.48px;transform:scaleX(0.929)">&#x27;023342757</span></div><div class="c" style="left:218px;top:487px;width:63px"><span class="t" style="left:1.5px;top:4.48px;transform:scaleX(0.995)">Mr Damaceno</span></div><svg class="a" style="left:286px;top:487px" width="59" height="19"><use href="#hh"/></svg><div class="c" style="left:346px;top:487px;width:63px"><span class="t" style="left:1.5px;top:4.48px;transform:scaleX(1.029)">dmfurtado@</span></div><div class="c" style="left:410px;top:487px;width:63px"><span class="t" style="left:1.5px;top:4.48px;transform:scaleX(0.929)">&#x27;074049827</span></div><div class="c" style="left:474px;top:487px;width:63px"><span class="t" style="left:1.5px;top:4.48px;transform:scaleX(1.004)">Spice Tandoori</span></div><div class="c" style="left:538px;top:487px;width:63px"><span class="t" style="left:1.5px;top:4.48px;transform:scaleX(0.955)">141 High St</span></div><div class="c" style="left:602px;top:487px;width:63px"><span class="t" style="left:1.5px;top:4.48px;transform:scaleX(0.987)">Fort William</span></div><div class="c" style="left:666px;top:487px;width:63px"><span class="t" style="left:1.5px;top:4.48px;transform:scaleX(1.027)">Inverness-shire</span></div><div class="c" style="left:730px;top:487px;width:63px"><span class="t" style="left:1.5px;top:4.48px;transform:scaleX(0.904)">PH33 6EA</span></div><div class="c" style="left:794px;top:487px;width:63px"><span class="t" style="left:1.5px;top:4.48px;transform:scaleX(1.015)">Increasing Term</span></div><div class="c" style="left:858px;top:487px;width:63px"><span class="t" style="left:1.5px;top:4.48px;transform:scaleX(1.010)">Cancelled</span></div><svg class="a" style="left:926px;top:487px" width="59" height="19"><use href="#hh"/></svg><div class="c" style="left:986px;top:487px;width:63px"><span class="t r" style="right:2px;top:4.48px;transform:scaleX(0.934)">10.97</span></div><div class="c" style="left:1050px;top:487px;width:63px"><span class="t r" style="right:2px;top:4.48px;transform:scaleX(0.926)">0</span></div><div class="c" style="left:1114px;top:487px;width:63px"><span class="t r" style="right:2px;top:4.48px;transform:scaleX(0.933)">218.17</span></div><svg class="a" style="left:1182px;top:487px" width="59" height="19"><use href="#hh"/></svg><svg class="a" style="left:1246px;top:487px" width="59" height="19"><use href="#hh"/></svg><div class="c" style="left:1306px;top:487px;width:63px"><span class="t r" style="right:2px;top:4.48px;transform:scaleX(0.952)">Mar-20</span></div><div class="c" style="left:1370px;top:487px;width:63px"><span class="t" style="left:1.5px;top:4.48px;transform:scaleX(1.000)">Smarter Cover</span></div><div class="c" style="left:1434px;top:487px;width:63px"><span class="t" style="left:1.5px;top:4.48px;transform:scaleX(0.880)">SMARTER</span></div><div class="c" style="left:1498px;top:487px;width:63px"><span class="t r" style="right:2px;top:4.48px;transform:scaleX(0.926)">556053</span></div><div class="c" style="left:1562px;top:487px;width:191px"><span class="t" style="left:1.5px;top:4.48px;transform:scaleX(1.006)">DD Reinstatement required</span></div><div class="c" style="left:90px;top:507px;width:63px"><span class="t r" style="right:2px;top:4.48px;transform:scaleX(0.926)">8821290</span></div><div class="c" style="left:154px;top:507px;width:63px"><span class="t" style="left:1.5px;top:4.48px;transform:scaleX(0.929)">&#x27;022516660</span></div><div class="c" style="left:218px;top:507px;width:63px"><span class="t" style="left:1.5px;top:4.48px;transform:scaleX(0.982)">Mr Anthony Fa</span></div><svg class="a" style="left:286px;top:507px" width="59" height="19"><use href="#hh"/></svg><div class="c" style="left:346px;top:507px;width:63px"><span class="t" style="left:1.5px;top:4.48px;transform:scaleX(1.029)">anthonyfarr@</span></div><div class="c" style="left:410px;top:507px;width:63px"><span class="t" style="left:1.5px;top:4.48px;transform:scaleX(0.929)">&#x27;079308700</span></div><div class="c" style="left:474px;top:507px;width:63px"><span class="t" style="left:1.5px;top:4.48px;transform:scaleX(0.981)">3 Parnell Rd</span></div><div class="c" style="left:538px;top:507px;width:63px"><span class="t" style="left:1.5px;top:4.48px;transform:scaleX(0.880)">BRAINTREE</span></div><div class="c" style="left:730px;top:507px;width:63px"><span class="t" style="left:1.5px;top:4.48px;transform:scaleX(0.900)">CM7 3AE</span></div><div class="c" style="left:794px;top:507px;width:63px"><span class="t" style="left:1.5px;top:4.48px;transform:scaleX(1.013)">Life Insurance</span></div><div class="c" style="left:858px;top:507px;width:63px"><span class="t" style="left:1.5px;top:4.48px;transform:scaleX(1.010)">Cancelled</span></div><svg class="a" style="left:926px;top:507px" width="59" height="19"><use href="#hh"/></svg><div class="c" style="left:986px;top:507px;width:63px"><span class="t r" style="right:2px;top:4.48px;transform:scaleX(0.934)">78.51</span></div><div class="c" style="left:1050px;top:507px;width:63px"><span class="t r" style="right:2px;top:4.48px;transform:scaleX(0.926)">0</span></div><div class="c" style="left:1114px;top:507px;width:63px"><span class="t r" style="right:2px;top:4.48px;transform:scaleX(0.933)">1156.4</span></div><svg class="a" style="left:1182px;top:507px" width="59" height="19"><use href="#hh"/></svg><svg class="a" style="left:1246px;top:507px" width="59" height="19"><use href="#hh"/></svg><div class="c" style="left:1306px;top:507px;width:63px"><span class="t r" style="right:2px;top:4.48px;transform:scaleX(0.952)">Mar-20</span></div><div class="c" style="left:1370px;top:507px;width:63px"><span class="t" style="left:1.5px;top:4.48px;transform:scaleX(1.000)">Smarter Cover</span></div><div class="c" style="left:1434px;top:507px;width:63px"><span class="t" style="left:1.5px;top:4.48px;transform:scaleX(0.880)">SMARTER</span></div><div class="c" style="left:1498px;top:507px;width:63px"><span class="t r" style="right:2px;top:4.48px;transform:scaleX(0.926)">556053</span></div><div class="c" style="left:1562px;top:507px;width:191px"><span class="t" style="left:1.5px;top:4.48px;transform:scaleX(1.006)">DD Reinstatement required</span></div><div class="c" style="left:90px;top:527px;width:63px"><span class="t r" style="right:2px;top:4.48px;transform:scaleX(0.926)">8821290</span></div><div class="c" style="left:154px;top:527px;width:63px"><span class="t" style="left:1.5px;top:4.48px;transform:scaleX(0.929)">&#x27;023407840</span></div><div class="c" style="left:218px;top:527px;width:63px"><span class="t" style="left:1.5px;top:4.48px;transform:scaleX(0.976)">Mr George Gle</span></div><svg class="a" style="left:286px;top:527px" width="59" height="19"><use href="#hh"/></svg><div class="c" style="left:346px;top:527px;width:63px"><span class="t" style="left:1.5px;top:4.48px;transform:scaleX(1.028)">george.glen@</span></div><div class="c" style="left:410px;top:527px;width:63px"><span class="t" style="left:1.5px;top:4.48px;transform:scaleX(0.929)">&#x27;077084107</span></div><div class="c" style="left:474px;top:527px;width:63px"><span class="t" style="left:1.5px;top:4.48px;transform:scaleX(0.975)">19 West Lane</span></div><div class="c" style="left:538px;top:527px;width:63px"><span class="t" style="left:1.5px;top:4.48px;transform:scaleX(0.880)">COWDENBEATH</span></div><div class="c" style="left:730px;top:527px;width:63px"><span class="t" style="left:1.5px;top:4.48px;transform:scaleX(0.901)">KY4 9PE</span></div><div class="c" style="left:794px;top:527px;width:63px"><span class="t" style="left:1.5px;top:4.48px;transform:scaleX(1.015)">Increasing Term</span></div><div class="c" style="left:858px;top:527px;width:63px"><span class="t" style="left:1.5px;top:4.48px;transform:scaleX(1.010)">Cancelled</span></div><svg class="a" style="left:926px;top:527px" width="59" height="19"><use href="#hh"/></svg><div class="c" style="left:986px;top:527px;width:63px"><span class="t r" style="right:2px;top:4.48px;transform:scaleX(0.934)">30.11</span></div><div class="c" style="left:1050px;top:527px;width:63px"><span class="t r" style="right:2px;top:4.48px;transform:scaleX(0.926)">0</span></div><div class="c" style="left:1114px;top:527px;width:63px"><span class="t r" style="right:2px;top:4.48px;transform:scaleX(0.934)">672.9</span></div><svg class="a" style="left:1182px;top:527px" width="59" height="19"><use href="#hh"/></svg><svg class="a" style="left:1246px;top:527px" width="59" height="19"><use href="#hh"/></svg><div class="c" style="left:1306px;top:527px;width:63px"><span class="t r" style="right:2px;top:4.48px;transform:scaleX(0.952)">Mar-20</span></div><div class="c" style="left:1370px;top:527px;width:63px"><span class="t" style="left:1.5px;top:4.48px;transform:scaleX(1.000)">Smarter Cover</span></div><div class="c" style="left:1434px;top:527px;width:63px"><span class="t" style="left:1.5px;top:4.48px;transform:scaleX(0.880)">SMARTER</span></div><div class="c" style="left:1498px;top:527px;width:63px"><span class="t r" style="right:2px;top:4.48px;transform:scaleX(0.926)">556053</span></div><div class="c" style="left:1562px;top:527px;width:191px"><span class="t" style="left:1.5px;top:4.48px;transform:scaleX(1.006)">DD Reinstatement required</span></div><div class="c" style="left:90px;top:547px;width:63px"><span class="t r" style="right:2px;top:4.48px;transform:scaleX(0.926)">8821290</span></div><div class="c" style="left:154px;top:547px;width:63px"><span class="t" style="left:1.5px;top:4.48px;transform:scaleX(0.929)">&#x27;020200379</span></div><div class="c" style="left:218px;top:547px;width:63px"><span class="t" style="left:1.5px;top:4.48px;transform:scaleX(0.980)">Mr Simon Row</span></div><svg class="a" style="left:286px;top:547px" width="59" height="19"><use href="#hh"/></svg><div class="c" style="left:346px;top:547px;width:63px"><span class="t" style="left:1.5px;top:4.48px;transform:scaleX(1.029)">simonrowe@</span></div><div class="c" style="left:410px;top:547px;width:63px"><span class="t" style="left:1.5px;top:4.48px;transform:scaleX(0.929)">&#x27;078874769</span></div><div class="c" style="left:474px;top:547px;width:63px"><span class="t" style="left:1.5px;top:4.48px;transform:scaleX(0.969)">26 Mullion Cl</span></div><div class="c" style="left:538px;top:547px;width:63px"><span class="t" style="left:1.5px;top:4.48px;transform:scaleX(1.007)">Padgate</span></div><div class="c" style="left:602px;top:547px;width:63px"><span class="t" style="left:1.5px;top:4.48px;transform:scaleX(0.880)">WARRINGTON</span></div><div class="c" style="left:730px;top:547px;width:63px"><span class="t" style="left:1.5px;top:4.48px;transform:scaleX(0.899)">WA2 0QP</span></div><div class="c" style="left:794px;top:547px;width:63px"><span class="t" style="left:1.5px;top:4.48px;transform:scaleX(1.013)">Life Insurance</span></div><div class="c" style="left:858px;top:547px;width:63px"><span class="t" style="left:1.5px;top:4.48px;transform:scaleX(1.010)">Cancelled</span></div><svg class="a" style="left:926px;top:547px" width="59" height="19"><use href="#hh"/></svg><div class="c" style="left:986px;top:547px;width:63px"><span class="t r" style="right:2px;top:4.48px;transform:scaleX(0.934)">18.75</span></div><div class="c" style="left:1050px;top:547px;width:63px"><span class="t r" style="right:2px;top:4.48px;transform:scaleX(0.926)">0</span></div><div class="c" style="left:1114px;top:547px;width:63px"><span class="t r" style="right:2px;top:4.48px;transform:scaleX(0.926)">0</span></div><div class="c" style="left:1178px;top:547px;width:63px"><span class="t" style="left:1.5px;top:4.48px;transform:scaleX(0.991)">01/01/000</span></div><svg class="a" style="left:1246px;top:547px" width="59" height="19"><use href="#hh"/></svg><div class="c" style="left:1306px;top:547px;width:63px"><span class="t r" style="right:2px;top:4.48px;transform:scaleX(0.952)">Mar-20</span></div><div class="c" style="left:1370px;top:547px;width:63px"><span class="t" style="left:1.5px;top:4.48px;transform:scaleX(1.000)">Smarter Cover</span></div><div class="c" style="left:1434px;top:547px;width:63px"><span class="t" style="left:1.5px;top:4.48px;transform:scaleX(0.880)">SMARTER</span></div><div class="c" style="left:1498px;top:547px;width:63px"><span class="t r" style="right:2px;top:4.48px;transform:scaleX(0.926)">556053</span></div><div class="c" style="left:1562px;top:547px;width:191px"><span class="t" style="left:1.5px;top:4.48px;transform:scaleX(1.006)">DD Reinstatement required</span></div><div class="c" style="left:90px;top:567px;width:63px"><span class="t r" style="right:2px;top:4.48px;transform:scaleX(0.926)">8821290</span></div><div class="c" style="left:154px;top:567px;width:63px"><span class="t" style="left:1.5px;top:4.48px;transform:scaleX(0.929)">&#x27;023221690</span></div><div class="c" style="left:218px;top:567px;width:63px"><span class="t" style="left:1.5px;top:4.48px;transform:scaleX(0.989)">Mr Paul Corcoran</span></div><svg class="a" style="left:286px;top:567px" width="59" height="19"><use href="#hh"/></svg><div class="c" style="left:346px;top:567px;width:63px"><span class="t" style="left:1.5px;top:4.48px;transform:scaleX(1.028)">paulcorco@</span></div><div class="c" style="left:410px;top:567px;width:63px"><span class="t" style="left:1.5px;top:4.48px;transform:scaleX(0.929)">&#x27;077607185</span></div><div class="c" style="left:474px;top:567px;width:63px"><span class="t" style="left:1.5px;top:4.48px;transform:scaleX(0.985)">3 South Kent</span></div><div class="c" style="left:538px;top:567px;width:63px"><span class="t" style="left:1.5px;top:4.48px;transform:scaleX(1.009)">Northfleet</span></div><div class="c" style="left:602px;top:567px;width:63px"><span class="t" style="left:1.5px;top:4.48px;transform:scaleX(0.880)">GRAVESEND</span></div><div class="c" style="left:730px;top:567px;width:63px"><span class="t" style="left:1.5px;top:4.48px;transform:scaleX(0.904)">DA11 9HT</span></div><div class="c" style="left:794px;top:567px;width:63px"><span class="t" style="left:1.5px;top:4.48px;transform:scaleX(1.015)">Increasing Term</span></div><div class="c" style="left:858px;top:567px;width:63px"><span class="t" style="left:1.5px;top:4.48px;transform:scaleX(1.010)">Cancelled</span></div><svg class="a" style="left:926px;top:567px" width="59" height="19"><use href="#hh"/></svg><div class="c" style="left:986px;top:567px;width:63px"><span class="t r" style="right:2px;top:4.48px;transform:scaleX(0.934)">11.45</span></div><div class="c" style="left:1050px;top:567px;width:63px"><span class="t r" style="right:2px;top:4.48px;transform:scaleX(0.926)">0</span></div><div class="c" style="left:1114px;top:567px;width:63px"><span class="t r" style="right:2px;top:4.48px;transform:scaleX(0.933)">239.21</span></div><svg class="a" style="left:1182px;top:567px" width="59" height="19"><use href="#hh"/></svg><svg class="a" style="left:1246px;top:567px" width="59" height="19"><use href="#hh"/></svg><div class="c" style="left:1306px;top:567px;width:63px"><span class="t r" style="right:2px;top:4.48px;transform:scaleX(0.952)">Mar-20</span></div><div class="c" style="left:1370px;top:567px;width:63px"><span class="t" style="left:1.5px;top:4.48px;transform:scaleX(1.000)">Smarter Cover</span></div><div class="c" style="left:1434px;top:567px;width:63px"><span class="t" style="left:1.5px;top:4.48px;transform:scaleX(0.880)">SMARTER</span></div><div class="c" style="left:1498px;top:567px;width:63px"><span class="t r" style="right:2px;top:4.48px;transform:scaleX(0.926)">556053</span></div><div class="c" style="left:1562px;top:567px;width:191px"><span class="t" style="left:1.5px;top:4.48px;transform:scaleX(1.006)">DD Reinstatement required</span></div><div class="c" style="left:90px;top:587px;width:63px"><span class="t r" style="right:2px;top:4.48px;transform:scaleX(0.926)">8821290</span></div><div class="c" style="left:154px;top:587px;width:63px"><span class="t" style="left:1.5px;top:4.48px;transform:scaleX(0.929)">&#x27;022953560</span></div><div class="c" style="left:218px;top:587px;width:63px"><span class="t" style="left:1.5px;top:4.48px;transform:scaleX(0.984)">Mrs Carol Smith</span></div><svg class="a" style="left:286px;top:587px" width="59" height="19"><use href="#hh"/></svg><div class="c" style="left:346px;top:587px;width:63px"><span class="t" style="left:1.5px;top:4.48px;transform:scaleX(0.984)">carol1513@</span></div><div class="c" style="left:410px;top:587px;width:63px"><span class="t" style="left:1.5px;top:4.48px;transform:scaleX(0.929)">&#x27;007881073</span></div><div class="c" style="left:474px;top:587px;width:63px"><span class="t" style="left:1.5px;top:4.48px;transform:scaleX(0.982)">15 Valley View</span></div><div class="c" style="left:538px;top:587px;width:63px"><span class="t" style="left:1.5px;top:4.48px;transform:scaleX(1.011)">Eckington</span></div><div class="c" style="left:602px;top:587px;width:63px"><span class="t" style="left:1.5px;top:4.48px;transform:scaleX(0.880)">SHEFFIELD</span></div><div class="c" style="left:730px;top:587px;width:63px"><span class="t" style="left:1.5px;top:4.48px;transform:scaleX(0.907)">S21 4HD</span></div><div class="c" style="left:794px;top:587px;width:63px"><span class="t" style="left:1.5px;top:4.48px;transform:scaleX(1.013)">Life Insurance</span></div><div class="c" style="left:858px;top:587px;width:63px"><span class="t" style="left:1.5px;top:4.48px;transform:scaleX(1.010)">Cancelled</span></div><svg class="a" style="left:926px;top:587px" width="59" height="19"><use href="#hh"/></svg><div class="c" style="left:986px;top:587px;width:63px"><span class="t r" style="right:2px;top:4.48px;transform:scaleX(0.937)">10.2</span></div><div class="c" style="left:1050px;top:587px;width:63px"><span class="t r" style="right:2px;top:4.48px;transform:scaleX(0.926)">0</span></div><div class="c" style="left:1114px;top:587px;width:63px"><span class="t r" style="right:2px;top:4.48px;transform:scaleX(0.933)">183.13</span></div><svg class="a" style="left:1182px;top:587px" width="59" height="19"><use href="#hh"/></svg><svg class="a" style="left:1246px;top:587px" width="59" height="19"><use href="#hh"/></svg><div class="c" style="left:1306px;top:587px;width:63px"><span class="t r" style="right:2px;top:4.48px;transform:scaleX(0.963)">Feb-20</span></div><div class="c" style="left:1370px;top:587px;width:63px"><span class="t" style="left:1.5px;top:4.48px;transform:scaleX(1.000)">Smarter Cover</span></div><div class="c" style="left:1434px;top:587px;width:63px"><span class="t" style="left:1.5px;top:4.48px;transform:scaleX(0.880)">SMARTER</span></div><div class="c" style="left:1498px;top:587px;width:63px"><span class="t r" style="right:2px;top:4.48px;transform:scaleX(0.926)">556053</span></div><div class="c" style="left:1562px;top:587px;width:191px"><span class="t" style="left:1.5px;top:4.48px;transform:scaleX(1.006)">DD Reinstatement required</span></div><div class="c" style="left:90px;top:607px;width:63px"><span class="t r" style="right:2px;top:4.48px;transform:scaleX(0.926)">8821290</span></div><div class="c" style="left:154px;top:607px;width:63px"><span class="t" style="left:1.5px;top:4.48px;transform:scaleX(0.929)">&#x27;023423253</span></div><div class="c" style="left:218px;top:607px;width:63px"><span class="t" style="left:1.5px;top:4.48px;transform:scaleX(0.981)">Mr Michael Pick</span></div><svg class="a" style="left:286px;top:607px" width="59" height="19"><use href="#hh"/></svg><div class="c" style="left:346px;top:607px;width:63px"><span class="t" style="left:1.5px;top:4.48px;transform:scaleX(1.029)">mikepickles@</span></div><div class="c" style="left:410px;top:607px;width:63px"><span class="t" style="left:1.5px;top:4.48px;transform:scaleX(0.929)">&#x27;012755421</span></div><div class="c" style="left:474px;top:607px;width:63px"><span class="t" style="left:1.5px;top:4.48px;transform:scaleX(0.969)">Flat 1</span></div><div class="c" style="left:538px;top:607px;width:63px"><span class="t" style="left:1.5px;top:4.48px;transform:scaleX(0.996)">43 Cambridge</span></div><div class="c" style="left:602px;top:607px;width:63px"><span class="t" style="left:1.5px;top:4.48px;transform:scaleX(0.880)">CLEVEDON</span></div><div class="c" style="left:730px;top:607px;width:63px"><span class="t" style="left:1.5px;top:4.48px;transform:scaleX(0.902)">BS21 7DW</span></div><div class="c" style="left:794px;top:607px;width:63px"><span class="t" style="left:1.5px;top:4.48px;transform:scaleX(1.015)">Increasing Term</span></div><div class="c" style="left:858px;top:607px;width:63px"><span class="t" style="left:1.5px;top:4.48px;transform:scaleX(1.010)">Cancelled</span></div><svg class="a" style="left:926px;top:607px" width="59" height="19"><use href="#hh"/></svg><div class="c" style="left:986px;top:607px;width:63px"><span class="t r" style="right:2px;top:4.48px;transform:scaleX(0.934)">10.97</span></div><div class="c" style="left:1050px;top:607px;width:63px"><span class="t r" style="right:2px;top:4.48px;transform:scaleX(0.926)">0</span></div><div class="c" style="left:1114px;top:607px;width:63px"><span class="t r" style="right:2px;top:4.48px;transform:scaleX(0.933)">255.82</span></div><svg class="a" style="left:1182px;top:607px" width="59" height="19"><use href="#hh"/></svg><svg class="a" style="left:1246px;top:607px" width="59" height="19"><use href="#hh"/></svg><div class="c" style="left:1306px;top:607px;width:63px"><span class="t r" style="right:2px;top:4.48px;transform:scaleX(0.966)">Jan-20</span></div><div class="c" style="left:1370px;top:607px;width:63px"><span class="t" style="left:1.5px;top:4.48px;transform:scaleX(1.000)">Smarter Cover</span></div><div class="c" style="left:1434px;top:607px;width:63px"><span class="t" style="left:1.5px;top:4.48px;transform:scaleX(0.880)">SMARTER</span></div><div class="c" style="left:1498px;top:607px;width:63px"><span class="t r" style="right:2px;top:4.48px;transform:scaleX(0.926)">556053</span></div><div class="c" style="left:1562px;top:607px;width:191px"><span class="t" style="left:1.5px;top:4.48px;transform:scaleX(0.999)">Refer to Service Area</span></div><div class="c" style="left:90px;top:627px;width:63px"><span class="t r" style="right:2px;top:4.48px;transform:scaleX(0.926)">8821290</span></div><div class="c" style="left:154px;top:627px;width:63px"><span class="t" style="left:1.5px;top:4.48px;transform:scaleX(0.929)">&#x27;020193948</span></div><div class="c" style="left:218px;top:627px;width:63px"><span class="t" style="left:1.5px;top:4.48px;transform:scaleX(0.983)">Mrs Lisa Rowe</span></div><svg class="a" style="left:286px;top:627px" width="59" height="19"><use href="#hh"/></svg><div class="c" style="left:346px;top:627px;width:63px"><span class="t" style="left:1.5px;top:4.48px;transform:scaleX(1.028)">moorcroft@</span></div><div class="c" style="left:410px;top:627px;width:63px"><span class="t" style="left:1.5px;top:4.48px;transform:scaleX(0.929)">&#x27;078874769</span></div><div class="c" style="left:474px;top:627px;width:63px"><span class="t" style="left:1.5px;top:4.48px;transform:scaleX(0.969)">26 Mullion Cl</span></div><div class="c" style="left:538px;top:627px;width:63px"><span class="t" style="left:1.5px;top:4.48px;transform:scaleX(1.007)">Padgate</span></div><div class="c" style="left:602px;top:627px;width:63px"><span class="t" style="left:1.5px;top:4.48px;transform:scaleX(0.880)">WARRINGTON</span></div><div class="c" style="left:730px;top:627px;width:63px"><span class="t" style="left:1.5px;top:4.48px;transform:scaleX(0.899)">WA2 0QP</span></div><div class="c" style="left:794px;top:627px;width:63px"><span class="t" style="left:1.5px;top:4.48px;transform:scaleX(1.013)">Life Insurance</span></div><div class="c" style="left:858px;top:627px;width:63px"><span class="t" style="left:1.5px;top:4.48px;transform:scaleX(0.976)">Bounced DD</span></div><svg class="a" style="left:926px;top:627px" width="59" height="19"><use href="#hh"/></svg><div class="c" style="left:986px;top:627px;width:63px"><span class="t r" style="right:2px;top:4.48px;transform:scaleX(0.934)">11.41</span></div><div class="c" style="left:1050px;top:627px;width:63px"><span class="t r" style="right:2px;top:4.48px;transform:scaleX(0.926)">0</span></div><div class="c" style="left:1114px;top:627px;width:63px"><span class="t r" style="right:2px;top:4.48px;transform:scaleX(0.926)">0</span></div><div class="c" style="left:1178px;top:627px;width:63px"><span class="t" style="left:1.5px;top:4.48px;transform:scaleX(0.991)">01/01/000</span></div><svg class="a" style="left:1246px;top:627px" width="59" height="19"><use href="#hh"/></svg><div class="c" style="left:1306px;top:627px;width:63px"><span class="t r" style="right:2px;top:4.48px;transform:scaleX(0.956)">Apr-20</span></div><div class="c" style="left:1370px;top:627px;width:63px"><span class="t" style="left:1.5px;top:4.48px;transform:scaleX(1.000)">Smarter Cover</span></div><div class="c" style="left:1434px;top:627px;width:63px"><span class="t" style="left:1.5px;top:4.48px;transform:scaleX(0.880)">SMARTER</span></div><div class="c" style="left:1498px;top:627px;width:63px"><span class="t r" style="right:2px;top:4.48px;transform:scaleX(0.926)">556053</span></div><div class="c" style="left:1562px;top:627px;width:191px"><span class="t" style="left:1.5px;top:4.48px;transform:scaleX(1.006)">DD Reinstatement required</span></div><div class="c" style="left:90px;top:647px;width:63px"><span class="t" style="left:1.5px;top:4.48px;transform:scaleX(1.000)">Total Policies</span></div><div class="c" style="left:154px;top:647px;width:63px"><span class="t r" style="right:2px;top:4.48px;transform:scaleX(0.926)">19</span></div><div class="c" style="left:986px;top:647px;width:63px"><span class="t" style="left:1.5px;top:4.48px;transform:scaleX(1.003)">Total Clawback</span></div><div class="c" style="left:1050px;top:647px;width:63px"><span class="t r" style="right:2px;top:4.48px;transform:scaleX(0.931)">10299.99</span></div><div class="a" style="left:0px;top:187px;width:1781px;height:19px;background:#fff"></div><div class="a" style="left:26px;top:187px;width:63px;height:19px;background:#e1e1e1"></div><svg class="a" style="left:8px;top:189px" width="16" height="16" viewBox="0 0 16 16"><path d="M14 2 L14 14 L2 14 Z" fill="#dfdfdf"/></svg><div class="a" style="left:89px;top:187px;width:1px;height:19px;background:#ababab"></div><div class="a" style="left:153px;top:187px;width:1px;height:19px;background:#dadada"></div><div class="a" style="left:217px;top:187px;width:1px;height:19px;background:#dadada"></div><div class="a" style="left:281px;top:187px;width:1px;height:19px;background:#dadada"></div><div class="a" style="left:345px;top:187px;width:1px;height:19px;background:#dadada"></div><div class="a" style="left:409px;top:187px;width:1px;height:19px;background:#dadada"></div><div class="a" style="left:473px;top:187px;width:1px;height:19px;background:#dadada"></div><div class="a" style="left:537px;top:187px;width:1px;height:19px;background:#dadada"></div><div class="a" style="left:601px;top:187px;width:1px;height:19px;background:#dadada"></div><div class="a" style="left:665px;top:187px;width:1px;height:19px;background:#dadada"></div><div class="a" style="left:729px;top:187px;width:1px;height:19px;background:#dadada"></div><div class="a" style="left:793px;top:187px;width:1px;height:19px;background:#dadada"></div><div class="a" style="left:857px;top:187px;width:1px;height:19px;background:#dadada"></div><div class="a" style="left:921px;top:187px;width:1px;height:19px;background:#dadada"></div><div class="a" style="left:985px;top:187px;width:1px;height:19px;background:#dadada"></div><div class="a" style="left:1049px;top:187px;width:1px;height:19px;background:#dadada"></div><div class="a" style="left:1113px;top:187px;width:1px;height:19px;background:#dadada"></div><div class="a" style="left:1177px;top:187px;width:1px;height:19px;background:#dadada"></div><div class="a" style="left:1241px;top:187px;width:1px;height:19px;background:#dadada"></div><div class="a" style="left:1305px;top:187px;width:1px;height:19px;background:#dadada"></div><div class="a" style="left:1369px;top:187px;width:1px;height:19px;background:#dadada"></div><div class="a" style="left:1433px;top:187px;width:1px;height:19px;background:#dadada"></div><div class="a" style="left:1497px;top:187px;width:1px;height:19px;background:#dadada"></div><div class="a" style="left:1561px;top:187px;width:1px;height:19px;background:#dadada"></div><div class="a" style="left:1625px;top:187px;width:1px;height:19px;background:#dadada"></div><div class="a" style="left:1689px;top:187px;width:1px;height:19px;background:#dadada"></div><div class="a" style="left:1753px;top:187px;width:1px;height:19px;background:#dadada"></div><div class="a" style="left:25px;top:187px;width:1px;height:489px;background:#ababab"></div><div class="a" style="left:0px;top:206px;width:1781px;height:1px;background:#ababab"></div><div class="t ch" style="left:27.5px;top:189.98px;width:60px;text-align:center;font-size:13.6px;color:#217346;transform:scaleX(0.88);transform-origin:30px 0;font-weight:bold">A</div><div class="t ch" style="left:91.5px;top:190.48px;width:60px;text-align:center;font-size:13.6px;color:#444;transform:scaleX(0.88);transform-origin:30px 0;">B</div><div class="t ch" style="left:155.5px;top:190.48px;width:60px;text-align:center;font-size:13.6px;color:#444;transform:scaleX(0.88);transform-origin:30px 0;">C</div><div class="t ch" style="left:219.5px;top:190.48px;width:60px;text-align:center;font-size:13.6px;color:#444;transform:scaleX(0.88);transform-origin:30px 0;">D</div><div class="t ch" style="left:283.5px;top:190.48px;width:60px;text-align:center;font-size:13.6px;color:#444;transform:scaleX(0.88);transform-origin:30px 0;">E</div><div class="t ch" style="left:347.5px;top:190.48px;width:60px;text-align:center;font-size:13.6px;color:#444;transform:scaleX(0.88);transform-origin:30px 0;">F</div><div class="t ch" style="left:411.5px;top:190.48px;width:60px;text-align:center;font-size:13.6px;color:#444;transform:scaleX(0.88);transform-origin:30px 0;">G</div><div class="t ch" style="left:475.5px;top:190.48px;width:60px;text-align:center;font-size:13.6px;color:#444;transform:scaleX(0.88);transform-origin:30px 0;">H</div><div class="t ch" style="left:539.5px;top:190.48px;width:60px;text-align:center;font-size:13.6px;color:#444;transform:scaleX(0.88);transform-origin:30px 0;">I</div><div class="t ch" style="left:603.5px;top:190.48px;width:60px;text-align:center;font-size:13.6px;color:#444;transform:scaleX(0.88);transform-origin:30px 0;">J</div><div class="t ch" style="left:667.5px;top:190.48px;width:60px;text-align:center;font-size:13.6px;color:#444;transform:scaleX(0.88);transform-origin:30px 0;">K</div><div class="t ch" style="left:731.5px;top:190.48px;width:60px;text-align:center;font-size:13.6px;color:#444;transform:scaleX(0.88);transform-origin:30px 0;">L</div><div class="t ch" style="left:795.5px;top:190.48px;width:60px;text-align:center;font-size:13.6px;color:#444;transform:scaleX(0.88);transform-origin:30px 0;">M</div><div class="t ch" style="left:859.5px;top:190.48px;width:60px;text-align:center;font-size:13.6px;color:#444;transform:scaleX(0.88);transform-origin:30px 0;">N</div><div class="t ch" style="left:923.5px;top:190.48px;width:60px;text-align:center;font-size:13.6px;color:#444;transform:scaleX(0.88);transform-origin:30px 0;">O</div><div class="t ch" style="left:987.5px;top:190.48px;width:60px;text-align:center;font-size:13.6px;color:#444;transform:scaleX(0.88);transform-origin:30px 0;">P</div><div class="t ch" style="left:1051.5px;top:190.48px;width:60px;text-align:center;font-size:13.6px;color:#444;transform:scaleX(0.88);transform-origin:30px 0;">Q</div><div class="t ch" style="left:1115.5px;top:190.48px;width:60px;text-align:center;font-size:13.6px;color:#444;transform:scaleX(0.88);transform-origin:30px 0;">R</div><div class="t ch" style="left:1179.5px;top:190.48px;width:60px;text-align:center;font-size:13.6px;color:#444;transform:scaleX(0.88);transform-origin:30px 0;">S</div><div class="t ch" style="left:1243.5px;top:190.48px;width:60px;text-align:center;font-size:13.6px;color:#444;transform:scaleX(0.88);transform-origin:30px 0;">T</div><div class="t ch" style="left:1307.5px;top:190.48px;width:60px;text-align:center;font-size:13.6px;color:#444;transform:scaleX(0.88);transform-origin:30px 0;">U</div><div class="t ch" style="left:1371.5px;top:190.48px;width:60px;text-align:center;font-size:13.6px;color:#444;transform:scaleX(0.88);transform-origin:30px 0;">V</div><div class="t ch" style="left:1435.5px;top:190.48px;width:60px;text-align:center;font-size:13.6px;color:#444;transform:scaleX(0.88);transform-origin:30px 0;">W</div><div class="t ch" style="left:1499.5px;top:190.48px;width:60px;text-align:center;font-size:13.6px;color:#444;transform:scaleX(0.88);transform-origin:30px 0;">X</div><div class="t ch" style="left:1563.5px;top:190.48px;width:60px;text-align:center;font-size:13.6px;color:#444;transform:scaleX(0.88);transform-origin:30px 0;">Y</div><div class="t ch" style="left:1627.5px;top:190.48px;width:60px;text-align:center;font-size:13.6px;color:#444;transform:scaleX(0.88);transform-origin:30px 0;">Z</div><div class="t ch" style="left:1691.5px;top:190.48px;width:60px;text-align:center;font-size:13.6px;color:#444;transform:scaleX(0.88);transform-origin:30px 0;">AA</div><div class="t ch" style="left:1755.5px;top:190.48px;width:60px;text-align:center;font-size:13.6px;color:#444;transform:scaleX(0.88);transform-origin:30px 0;">AB</div><div class="a" style="left:0px;top:207px;width:25px;height:19px;background:#e1e1e1"></div><div class="a" style="left:0px;top:226px;width:25px;height:1px;background:#d4d4d4"></div><div class="t" style="left:0px;top:211.48px;width:25px;text-align:center;font-size:13.6px;color:#217346;transform:scaleX(0.9);transform-origin:12.5px 0;font-weight:bold">1</div><div class="a" style="left:0px;top:246px;width:25px;height:1px;background:#d4d4d4"></div><div class="t" style="left:0px;top:231.48px;width:25px;text-align:center;font-size:13.6px;color:#444;transform:scaleX(0.9);transform-origin:12.5px 0;">2</div><div class="a" style="left:0px;top:266px;width:25px;height:1px;background:#d4d4d4"></div><div class="t" style="left:0px;top:251.48px;width:25px;text-align:center;font-size:13.6px;color:#444;transform:scaleX(0.9);transform-origin:12.5px 0;">3</div><div class="a" style="left:0px;top:286px;width:25px;height:1px;background:#d4d4d4"></div><div class="t" style="left:0px;top:271.48px;width:25px;text-align:center;font-size:13.6px;color:#444;transform:scaleX(0.9);transform-origin:12.5px 0;">4</div><div class="a" style="left:0px;top:306px;width:25px;height:1px;background:#d4d4d4"></div><div class="t" style="left:0px;top:291.48px;width:25px;text-align:center;font-size:13.6px;color:#444;transform:scaleX(0.9);transform-origin:12.5px 0;">5</div><div class="a" style="left:0px;top:326px;width:25px;height:1px;background:#d4d4d4"></div><div class="t" style="left:0px;top:311.48px;width:25px;text-align:center;font-size:13.6px;color:#444;transform:scaleX(0.9);transform-origin:12.5px 0;">6</div><div class="a" style="left:0px;top:346px;width:25px;height:1px;background:#d4d4d4"></div><div class="t" style="left:0px;top:331.48px;width:25px;text-align:center;font-size:13.6px;color:#444;transform:scaleX(0.9);transform-origin:12.5px 0;">7</div><div class="a" style="left:0px;top:366px;width:25px;height:1px;background:#d4d4d4"></div><div class="t" style="left:0px;top:351.48px;width:25px;text-align:center;font-size:13.6px;color:#444;transform:scaleX(0.9);transform-origin:12.5px 0;">8</div><div class="a" style="left:0px;top:386px;width:25px;height:1px;background:#d4d4d4"></div><div class="t" style="left:0px;top:371.48px;width:25px;text-align:center;font-size:13.6px;color:#444;transform:scaleX(0.9);transform-origin:12.5px 0;">9</div><div class="a" style="left:0px;top:406px;width:25px;height:1px;background:#d4d4d4"></div><div class="t" style="left:0px;top:391.48px;width:25px;text-align:center;font-size:13.6px;color:#444;transform:scaleX(0.9);transform-origin:12.5px 0;">10</div><div class="a" style="left:0px;top:426px;width:25px;height:1px;background:#d4d4d4"></div><div class="t" style="left:0px;top:411.48px;width:25px;text-align:center;font-size:13.6px;color:#444;transform:scaleX(0.9);transform-origin:12.5px 0;">11</div><div class="a" style="left:0px;top:446px;width:25px;height:1px;background:#d4d4d4"></div><div class="t" style="left:0px;top:431.48px;width:25px;text-align:center;font-size:13.6px;color:#444;transform:scaleX(0.9);transform-origin:12.5px 0;">12</div><div class="a" style="left:0px;top:466px;width:25px;height:1px;background:#d4d4d4"></div><div class="t" style="left:0px;top:451.48px;width:25px;text-align:center;font-size:13.6px;color:#444;transform:scaleX(0.9);transform-origin:12.5px 0;">13</div><div class="a" style="left:0px;top:486px;width:25px;height:1px;background:#d4d4d4"></div><div class="t" style="left:0px;top:471.48px;width:25px;text-align:center;font-size:13.6px;color:#444;transform:scaleX(0.9);transform-origin:12.5px 0;">14</div><div class="a" style="left:0px;top:506px;width:25px;height:1px;background:#d4d4d4"></div><div class="t" style="left:0px;top:491.48px;width:25px;text-align:center;font-size:13.6px;color:#444;transform:scaleX(0.9);transform-origin:12.5px 0;">15</div><div class="a" style="left:0px;top:526px;width:25px;height:1px;background:#d4d4d4"></div><div class="t" style="left:0px;top:511.48px;width:25px;text-align:center;font-size:13.6px;color:#444;transform:scaleX(0.9);transform-origin:12.5px 0;">16</div><div class="a" style="left:0px;top:546px;width:25px;height:1px;background:#d4d4d4"></div><div class="t" style="left:0px;top:531.48px;width:25px;text-align:center;font-size:13.6px;color:#444;transform:scaleX(0.9);transform-origin:12.5px 0;">17</div><div class="a" style="left:0px;top:566px;width:25px;height:1px;background:#d4d4d4"></div><div class="t" style="left:0px;top:551.48px;width:25px;text-align:center;font-size:13.6px;color:#444;transform:scaleX(0.9);transform-origin:12.5px 0;">18</div><div class="a" style="left:0px;top:586px;width:25px;height:1px;background:#d4d4d4"></div><div class="t" style="left:0px;top:571.48px;width:25px;text-align:center;font-size:13.6px;color:#444;transform:scaleX(0.9);transform-origin:12.5px 0;">19</div><div class="a" style="left:0px;top:606px;width:25px;height:1px;background:#d4d4d4"></div><div class="t" style="left:0px;top:591.48px;width:25px;text-align:center;font-size:13.6px;color:#444;transform:scaleX(0.9);transform-origin:12.5px 0;">20</div><div class="a" style="left:0px;top:626px;width:25px;height:1px;background:#d4d4d4"></div><div class="t" style="left:0px;top:611.48px;width:25px;text-align:center;font-size:13.6px;color:#444;transform:scaleX(0.9);transform-origin:12.5px 0;">21</div><div class="a" style="left:0px;top:646px;width:25px;height:1px;background:#d4d4d4"></div><div class="t" style="left:0px;top:631.48px;width:25px;text-align:center;font-size:13.6px;color:#444;transform:scaleX(0.9);transform-origin:12.5px 0;">22</div><div class="a" style="left:0px;top:666px;width:25px;height:1px;background:#d4d4d4"></div><div class="t" style="left:0px;top:651.48px;width:25px;text-align:center;font-size:13.6px;color:#444;transform:scaleX(0.9);transform-origin:12.5px 0;">23</div><div class="a" style="left:0px;top:686px;width:25px;height:1px;background:#d4d4d4"></div><div class="t" style="left:0px;top:671.48px;width:25px;text-align:center;font-size:13.6px;color:#444;transform:scaleX(0.9);transform-origin:12.5px 0;">24</div><div class="a" style="left:24px;top:205px;width:67px;height:23px;border:2px solid #217346"></div><div class="a" style="left:86px;top:223px;width:6px;height:6px;background:#217346;border:1px solid #fff"></div><div class="t" style="left:860.47px;top:4.84px;font-size:12px;color:#444;transform:scaleX(0.9420);">Event_Download_20200121 (1) - Excel</div><div class="a" style="left:0px;top:23px;width:59px;height:25px;background:#217346"></div><div class="t" style="left:18.65px;top:30.24px;font-size:12px;color:#fff;transform:scaleX(0.8598);">FILE</div><div class="a" style="left:63px;top:23px;width:62px;height:25px;border:1px solid #d4d4d4;border-bottom:none;background:#fff"></div><div class="a" style="left:59px;top:47px;width:1722px;height:1px;background:#d4d4d4"></div><div class="a" style="left:64px;top:47px;width:60px;height:1px;background:#fff"></div><div class="t" style="left:76.03px;top:30.24px;font-size:12px;color:#217346;transform:scaleX(0.9855);">HOME</div><div class="t" style="left:138.76px;top:30.24px;font-size:12px;color:#444;transform:scaleX(0.8517);">INSERT</div><div class="t" style="left:204.13px;top:30.24px;font-size:12px;color:#444;transform:scaleX(0.8870);">PAGE LAYOUT</div><div class="t" style="left:307.08px;top:30.24px;font-size:12px;color:#444;transform:scaleX(0.9365);">FORMULAS</div><div class="t" style="left:397.11px;top:30.24px;font-size:12px;color:#444;transform:scaleX(0.9033);">DATA</div><div class="t" style="left:454.17px;top:30.24px;font-size:12px;color:#444;transform:scaleX(0.8421);">REVIEW</div><div class="t" style="left:523.55px;top:30.24px;font-size:12px;color:#444;transform:scaleX(0.8896);">VIEW</div><div class="a" style="left:0px;top:140px;width:1781px;height:1px;background:#d4d4d4"></div><div class="t" style="left:10.57px;top:91.14px;font-size:12px;color:#444;transform:scaleX(0.9428);">Paste</div><div class="t" style="left:67.36px;top:56.84px;font-size:12px;color:#444;transform:scaleX(1.0569);">Cut</div><div class="t" style="left:68.09px;top:80.24px;font-size:12px;color:#444;transform:scaleX(0.9934);">Copy</div><div class="t" style="left:68.03px;top:103.24px;font-size:12px;color:#444;transform:scaleX(0.9850);">Format Painter</div><div class="t" style="left:45.10px;top:126.69px;font-size:11px;color:#666;transform:scaleX(1.0804);">Clipboard</div><div class="a" style="left:157px;top:52px;width:1px;height:85px;background:#e1e1e1"></div><div class="a" style="left:162px;top:59px;width:111px;height:23px;border:1px solid #ababab;background:#fff"></div><div class="a" style="left:273px;top:59px;width:43px;height:23px;border:1px solid #ababab;background:#fff"></div><div class="t" style="left:164.88px;top:63.58px;font-size:13.6px;color:#000;transform:scaleX(0.9043);">Calibri</div><div class="t" style="left:276.04px;top:63.58px;font-size:13.6px;color:#000;transform:scaleX(0.7299);">11</div><div class="t" style="left:322.27px;top:65.12px;font-size:12.5px;color:#555;transform:scaleX(1.1100);">A</div><div class="t" style="left:345.28px;top:67.66px;font-size:9.5px;color:#555;transform:scaleX(1.1271);">A</div><div class="t" style="left:168.23px;top:94.37px;font-size:12.2px;color:#555;font-weight:bold;transform:scaleX(0.9408);">B</div><div class="t" style="left:211.12px;top:94.54px;font-size:12px;color:#555;font-weight:bold;transform:scaleX(1.2200);">U</div><div class="a" style="left:244px;top:90px;width:1px;height:22px;background:#e1e1e1"></div><div class="a" style="left:287px;top:90px;width:1px;height:22px;background:#e1e1e1"></div><div class="t" style="left:240.50px;top:126.69px;font-size:11px;color:#666;transform:scaleX(1.1033);">Font</div><div class="a" style="left:364px;top:52px;width:1px;height:85px;background:#e1e1e1"></div><div class="a" style="left:413px;top:59px;width:22px;height:23px;background:#9fd5b7"></div><div class="a" style="left:439px;top:59px;width:1px;height:23px;background:#e1e1e1"></div><div class="t" style="left:445.5px;top:62px;font-size:11px;color:#6d6d6d;font-weight:bold;transform:rotate(-45deg);transform-origin:6px 6px;">ab</div><div class="a" style="left:492px;top:58px;width:1px;height:54px;background:#e1e1e1"></div><div class="t" style="left:518.95px;top:64.84px;font-size:12px;color:#444;transform:scaleX(0.9366);">Wrap Text</div><div class="a" style="left:439px;top:90px;width:1px;height:22px;background:#e1e1e1"></div><div class="t" style="left:518.50px;top:95.84px;font-size:12px;color:#444;transform:scaleX(1.0117);">Merge &amp; Center</div><div class="t" style="left:461.98px;top:126.69px;font-size:11px;color:#666;transform:scaleX(1.0858);">Alignment</div><div class="a" style="left:628px;top:52px;width:1px;height:85px;background:#e1e1e1"></div><div class="a" style="left:633px;top:59px;width:131px;height:23px;border:1px solid #ababab;background:#fff"></div><div class="t" style="left:635.94px;top:63.58px;font-size:13.6px;color:#000;transform:scaleX(0.8228);">General</div><div class="t" style="left:671.97px;top:94.30px;font-size:15px;color:#555;transform:scaleX(0.9863);-webkit-text-stroke:0.35px #555;">%</div><div class="a" style="left:715px;top:90px;width:1px;height:21px;background:#e1e1e1"></div><div class="t" style="left:669.55px;top:126.69px;font-size:11px;color:#666;transform:scaleX(1.0568);">Number</div><div class="a" style="left:768px;top:52px;width:1px;height:85px;background:#e1e1e1"></div><div class="t" style="left:777.97px;top:90.64px;font-size:12px;color:#444;transform:scaleX(1.0404);">Conditional</div><div class="t" style="left:774.78px;top:106.74px;font-size:12px;color:#444;transform:scaleX(1.0397);">Formatting</div><div class="t" style="left:846.55px;top:90.64px;font-size:12px;color:#444;transform:scaleX(0.9697);">Format as</div><div class="t" style="left:856.55px;top:106.74px;font-size:12px;color:#444;transform:scaleX(0.9105);">Table</div><div class="a" style="left:903px;top:54px;width:547px;height:60px;border:1px solid #c6c6c6;background:#fff"></div><div class="a" style="left:904px;top:56px;width:106px;height:28px;border:3px solid #a0d6b4;background:#fff"></div><div class="t" style="left:910.51px;top:62.98px;font-size:13.6px;color:#000;transform:scaleX(1.0645);">Normal</div><div class="a" style="left:1013px;top:59px;width:100px;height:22px;background:#ffc7ce"></div><div class="t" style="left:1016.29px;top:62.98px;font-size:13.6px;color:#9c0006;transform:scaleX(0.9907);">Bad</div><div class="a" style="left:1119px;top:59px;width:100px;height:22px;background:#c6efce"></div><div class="t" style="left:1122.29px;top:62.98px;font-size:13.6px;color:#006100;transform:scaleX(1.0407);">Good</div><div class="a" style="left:1225px;top:59px;width:100px;height:22px;background:#ffeb9c"></div><div class="t" style="left:1227.88px;top:62.98px;font-size:13.6px;color:#9c5700;transform:scaleX(1.0044);">Neutral</div><div class="a" style="left:1331px;top:59px;width:100px;height:22px;border:1px solid #7f7f7f;background:#f2f2f2"></div><div class="t" style="left:1334.48px;top:62.98px;font-size:13.6px;color:#fa7d00;font-weight:bold;transform:scaleX(0.9388);">Calculation</div><div class="a" style="left:907px;top:87px;width:100px;height:22px;border:1px solid #3f3f3f;background:#a5a5a5"></div><div class="a" style="left:909px;top:89px;width:96px;height:18px;border:1px solid #3f3f3f"></div><div class="t" style="left:910.88px;top:90.88px;font-size:13.6px;color:#fff;font-weight:bold;transform:scaleX(0.9306);">Check Cell</div><div class="t" style="left:1016.97px;top:90.88px;font-size:13.6px;color:#7f7f7f;font-style:italic;transform:scaleX(1.0324);">Explanatory ...</div><div class="a" style="left:1119px;top:87px;width:100px;height:22px;border:1px solid #7f7f7f;background:#ffcc99"></div><div class="t" style="left:1121.72px;top:90.88px;font-size:13.6px;color:#3f3f76;transform:scaleX(1.0210);">Input</div><div class="t" style="left:1227.87px;top:90.88px;font-size:13.6px;color:#fa7d00;transform:scaleX(1.0114);">Linked Cell</div><div class="a" style="left:1225px;top:105.8px;width:100px;height:1px;background:#fa7d00"></div><div class="a" style="left:1225px;top:107.8px;width:100px;height:1px;background:#fa7d00"></div><div class="a" style="left:1331px;top:87px;width:100px;height:22px;border:1px solid #b2b2b2;background:#ffffcc"></div><div class="t" style="left:1333.76px;top:90.88px;font-size:13.6px;color:#000;transform:scaleX(1.1108);">Note</div><div class="a" style="left:1435px;top:54px;width:15px;height:60px;border:1px solid #c6c6c6;background:#fff"></div><div class="a" style="left:1435px;top:75px;width:15px;height:1px;background:#c6c6c6"></div><div class="a" style="left:1435px;top:94px;width:15px;height:1px;background:#c6c6c6"></div><div class="t" style="left:1098.02px;top:126.69px;font-size:11px;color:#666;transform:scaleX(0.9567);">Styles</div><div class="a" style="left:1457px;top:52px;width:1px;height:85px;background:#e1e1e1"></div><div class="t" style="left:1466.89px;top:90.84px;font-size:12px;color:#444;">Insert</div><div class="t" style="left:1507.54px;top:90.84px;font-size:12px;color:#444;transform:scaleX(0.9738);">Delete</div><div class="t" style="left:1546.99px;top:90.84px;font-size:12px;color:#444;transform:scaleX(1.0235);">Format</div><div class="t" style="left:1513.06px;top:126.69px;font-size:11px;color:#666;transform:scaleX(0.9705);">Cells</div><div class="a" style="left:1593px;top:52px;width:1px;height:85px;background:#e1e1e1"></div><div class="t" style="left:1620.38px;top:56.64px;font-size:12px;color:#444;transform:scaleX(1.0053);">AutoSum</div><div class="t" style="left:1619.58px;top:79.34px;font-size:12px;color:#444;transform:scaleX(1.0339);">Fill</div><div class="t" style="left:1620.02px;top:102.34px;font-size:12px;color:#444;transform:scaleX(0.9438);">Clear</div><div class="t" style="left:1693.44px;top:90.54px;font-size:12px;color:#444;transform:scaleX(1.0333);">Sort &amp;</div><div class="t" style="left:1693.72px;top:106.34px;font-size:12px;color:#444;transform:scaleX(0.9928);">Filter</div><div class="t" style="left:1735.37px;top:90.54px;font-size:12px;color:#444;transform:scaleX(1.0445);">Find &amp;</div><div class="t" style="left:1733.48px;top:106.34px;font-size:12px;color:#444;transform:scaleX(0.9475);">Select</div><div class="t" style="left:1666.96px;top:126.69px;font-size:11px;color:#666;transform:scaleX(1.1554);">Editing</div><div class="a" style="left:1780px;top:53px;width:1px;height:87px;background:#e1e1e1"></div><div class="a" style="left:5px;top:151px;width:102px;height:26px;border:1px solid #c6c6c6;background:#fff"></div><div class="t" style="left:11.97px;top:158.74px;font-size:13.3px;color:#222;transform:scaleX(1.0133);">A1</div><div class="a" style="left:121px;top:159px;width:2px;height:2px;background:#9a9a9a"></div><div class="a" style="left:121px;top:163px;width:2px;height:2px;background:#9a9a9a"></div><div class="a" style="left:121px;top:167px;width:2px;height:2px;background:#9a9a9a"></div><div class="a" style="left:137px;top:151px;width:110px;height:26px;border:1px solid #c6c6c6;background:#fff"></div><div class="a" style="left:250px;top:151px;width:1540px;height:26px;border:1px solid #c6c6c6;background:#fff"></div><div class="t" style="left:261.28px;top:158.14px;font-size:13.3px;color:#222;transform:scaleX(1.0234);">Policies at Risk for 21/01/2020</div><svg class="a" style="left:0;top:0" width="1781" height="186" viewBox="0 0 1781 186"><path d="M10 2.2 L20 1 L20 17 L10 15.8 Z" fill="#1d6f42" stroke="none" stroke-width="1" /><rect x="19.5" y="2.5" width="6" height="12.5" fill="#fff" stroke="#1d6f42" stroke-width="1.2" rx="1"/><line x1="20.5" y1="4.5" x2="21.8" y2="4.5" stroke="#1d6f42" stroke-width="1"/><line x1="22.6" y1="4.5" x2="24.4" y2="4.5" stroke="#1d6f42" stroke-width="1"/><line x1="20.5" y1="6.5" x2="21.8" y2="6.5" stroke="#1d6f42" stroke-width="1"/><line x1="22.6" y1="6.5" x2="24.4" y2="6.5" stroke="#1d6f42" stroke-width="1"/><line x1="20.5" y1="8.5" x2="21.8" y2="8.5" stroke="#1d6f42" stroke-width="1"/><line x1="22.6" y1="8.5" x2="24.4" y2="8.5" stroke="#1d6f42" stroke-width="1"/><line x1="20.5" y1="10.5" x2="21.8" y2="10.5" stroke="#1d6f42" stroke-width="1"/><line x1="22.6" y1="10.5" x2="24.4" y2="10.5" stroke="#1d6f42" stroke-width="1"/><line x1="20.5" y1="12.5" x2="21.8" y2="12.5" stroke="#1d6f42" stroke-width="1"/><line x1="22.6" y1="12.5" x2="24.4" y2="12.5" stroke="#1d6f42" stroke-width="1"/><path d="M12.2 5.2h1.9l1.2 2.2 1.2-2.2h1.9l-2.1 3.8 2.1 3.8h-1.9l-1.2-2.2-1.2 2.2h-1.9l2.1-3.8z" fill="#fff" stroke="none" stroke-width="1" /><path d="M40 2h14v14h-13l-1-1z" fill="#8447a8" stroke="none" stroke-width="1" /><rect x="42" y="3" width="10" height="6" fill="#fff" stroke="none" stroke-width="1" /><rect x="43" y="11" width="8" height="4" fill="#fff" stroke="none" stroke-width="1" /><rect x="45" y="13" width="2" height="2" fill="#8447a8" stroke="none" stroke-width="1" /><path d="M71 6 H78.5 A4 4 0 0 1 78.5 14 H77" fill="none" stroke="#a8a8a8" stroke-width="2.2" /><path d="M74.5 2.3 L70 6 L74.5 9.7" fill="none" stroke="#a8a8a8" stroke-width="2.4" stroke-linejoin="miter"/><path d="M89 7h5l-2.5 3z" fill="#b0b0b0"/><path d="M121 6 H113.5 A4 4 0 0 0 113.5 14 H115" fill="none" stroke="#a8a8a8" stroke-width="2.2" /><path d="M117.5 2.3 L122 6 L117.5 9.7" fill="none" stroke="#a8a8a8" stroke-width="2.4" stroke-linejoin="miter"/><path d="M129 7h5l-2.5 3z" fill="#b0b0b0"/><rect x="148" y="7" width="5" height="1" fill="#555" stroke="none" stroke-width="1" /><path d="M148 10h5l-2.5 3z" fill="#555"/><path d="M13 61 a2 2 0 0 1 2 -2 h3 v5 h15 v-5 h2 a2 2 0 0 1 2 2 v5 h-11 v18 h-11 a2 2 0 0 1 -2 -2 z" fill="#ebc57e" stroke="none" stroke-width="1" /><rect x="18" y="59.3" width="14" height="3.5" fill="#6d6d6d" stroke="none" stroke-width="1" /><rect x="22" y="56" width="6" height="4" fill="#6d6d6d" stroke="none" stroke-width="1" rx="1"/><rect x="24" y="57.2" width="2" height="1.6" fill="#fff" stroke="none" stroke-width="1" /><path d="M27.5 67.5 H35.5 L40.5 72.5 V85.5 H27.5 Z" fill="#fff" stroke="#6d6d6d" stroke-width="1.1" /><path d="M35.5 67.5 V72.5 H40.5" fill="none" stroke="#6d6d6d" stroke-width="1.1" /><path d="M22 111.5h5l-2.5 2.5z" fill="#6a6a6a"/><path d="M52.2 54.3 Q54.5 59.5 58.3 64.3 M61.6 54.3 Q59.3 59.5 55.6 64.3" fill="none" stroke="#6d6d6d" stroke-width="2" /><circle cx="53" cy="66.2" r="2.4" fill="#fff" stroke="#4a7fc1" stroke-width="1.1"/><circle cx="61" cy="66.2" r="2.4" fill="#fff" stroke="#4a7fc1" stroke-width="1.1"/><path d="M49.5 88.5 V78.5 H55 L56.5 80" fill="none" stroke="#6d6d6d" stroke-width="1.1" /><path d="M55.5 91.5 V81.5 H61.5 L63.5 83.5 V91.5 Z" fill="#fff" stroke="#6d6d6d" stroke-width="1.1" /><line x1="51" y1="81.4" x2="54" y2="81.4" stroke="#3d72b5" stroke-width="1.1"/><line x1="51" y1="83.3" x2="54" y2="83.3" stroke="#3d72b5" stroke-width="1.1"/><line x1="51" y1="85.3" x2="54" y2="85.3" stroke="#3d72b5" stroke-width="1.1"/><line x1="57" y1="84.5" x2="62" y2="84.5" stroke="#3d72b5" stroke-width="1.1"/><line x1="57" y1="86.5" x2="62" y2="86.5" stroke="#3d72b5" stroke-width="1.1"/><line x1="57" y1="88.5" x2="62" y2="88.5" stroke="#3d72b5" stroke-width="1.1"/><path d="M106 84.2h5l-2.5 2.6z" fill="#6a6a6a"/><path d="M49 106.5 L55.5 103.5 L60.5 109.5 L57 114.8 Z" fill="#ebc57e" stroke="none" stroke-width="1" /><path d="M55.5 104.5 L60.5 101.5 L63.5 105.5 L59.5 109.5 Z" fill="#6d6d6d" stroke="none" stroke-width="1" /><path d="M61 102 L63 100.5 L65.2 103 L63.3 104.6 Z" fill="#6d6d6d" stroke="none" stroke-width="1" /><path d="M146.5 135.5V129.5H152.5" fill="none" stroke="#8a8a8a" stroke-width="1" /><path d="M148.5 131.5L152.5 135.5M149.5 135.5H152.5V132.5" fill="none" stroke="#8a8a8a" stroke-width="1" /><path d="M263 69h5l-2.5 2.7z" fill="#555"/><path d="M306 69h5l-2.5 2.7z" fill="#555"/><path d="M330 66 L332.6 63 L335.2 66 Z" fill="#3d7cc9" stroke="none" stroke-width="1" /><path d="M352 63 H357 L354.5 66 Z" fill="#3d7cc9" stroke="none" stroke-width="1" /><path d="M192.5 96.7 H198.5 M190 104.5 H196 M195.8 96.7 L192.8 104.5" fill="none" stroke="#555" stroke-width="1.3" /><rect x="212" y="105.6" width="8.8" height="1.2" fill="#555" stroke="none" stroke-width="1" /><path d="M231 100h5l-2.5 2.7z" fill="#6a6a6a"/><rect x="253" y="94" width="1" height="1" fill="#7a7a7a" stroke="none" stroke-width="1" /><rect x="253" y="100" width="1" height="1" fill="#7a7a7a" stroke="none" stroke-width="1" /><rect x="255" y="94" width="1" height="1" fill="#7a7a7a" stroke="none" stroke-width="1" /><rect x="255" y="100" width="1" height="1" fill="#7a7a7a" stroke="none" stroke-width="1" /><rect x="257" y="94" width="1" height="1" fill="#7a7a7a" stroke="none" stroke-width="1" /><rect x="257" y="100" width="1" height="1" fill="#7a7a7a" stroke="none" stroke-width="1" /><rect x="259" y="94" width="1" height="1" fill="#7a7a7a" stroke="none" stroke-width="1" /><rect x="259" y="100" width="1" height="1" fill="#7a7a7a" stroke="none" stroke-width="1" /><rect x="261" y="94" width="1" height="1" fill="#7a7a7a" stroke="none" stroke-width="1" /><rect x="261" y="100" width="1" height="1" fill="#7a7a7a" stroke="none" stroke-width="1" /><rect x="263" y="94" width="1" height="1" fill="#7a7a7a" stroke="none" stroke-width="1" /><rect x="263" y="100" width="1" height="1" fill="#7a7a7a" stroke="none" stroke-width="1" /><rect x="265" y="94" width="1" height="1" fill="#7a7a7a" stroke="none" stroke-width="1" /><rect x="265" y="100" width="1" height="1" fill="#7a7a7a" stroke="none" stroke-width="1" /><rect x="253" y="94" width="1" height="1" fill="#7a7a7a" stroke="none" stroke-width="1" /><rect x="259" y="94" width="1" height="1" fill="#7a7a7a" stroke="none" stroke-width="1" /><rect x="265" y="94" width="1" height="1" fill="#7a7a7a" stroke="none" stroke-width="1" /><rect x="253" y="96" width="1" height="1" fill="#7a7a7a" stroke="none" stroke-width="1" /><rect x="259" y="96" width="1" height="1" fill="#7a7a7a" stroke="none" stroke-width="1" /><rect x="265" y="96" width="1" height="1" fill="#7a7a7a" stroke="none" stroke-width="1" /><rect x="253" y="98" width="1" height="1" fill="#7a7a7a" stroke="none" stroke-width="1" /><rect x="259" y="98" width="1" height="1" fill="#7a7a7a" stroke="none" stroke-width="1" /><rect x="265" y="98" width="1" height="1" fill="#7a7a7a" stroke="none" stroke-width="1" /><rect x="253" y="100" width="1" height="1" fill="#7a7a7a" stroke="none" stroke-width="1" /><rect x="259" y="100" width="1" height="1" fill="#7a7a7a" stroke="none" stroke-width="1" /><rect x="265" y="100" width="1" height="1" fill="#7a7a7a" stroke="none" stroke-width="1" /><rect x="253" y="102" width="1" height="1" fill="#7a7a7a" stroke="none" stroke-width="1" /><rect x="259" y="102" width="1" height="1" fill="#7a7a7a" stroke="none" stroke-width="1" /><rect x="265" y="102" width="1" height="1" fill="#7a7a7a" stroke="none" stroke-width="1" /><rect x="253" y="104" width="1" height="1" fill="#7a7a7a" stroke="none" stroke-width="1" /><rect x="259" y="104" width="1" height="1" fill="#7a7a7a" stroke="none" stroke-width="1" /><rect x="265" y="104" width="1" height="1" fill="#7a7a7a" stroke="none" stroke-width="1" /><rect x="253" y="106" width="13" height="1" fill="#555" stroke="none" stroke-width="1" /><path d="M274 100h5l-2.5 2.7z" fill="#6a6a6a"/><path d="M297.2 100.4 L303 94.7 L308.8 100 L302.4 104.8 Z" fill="#fff" stroke="#666" stroke-width="1.1" /><path d="M300.7 97.8 V94 a1.5 1.2 0 0 1 3 0 V98.6" fill="none" stroke="#666" stroke-width="1.1" /><path d="M306.8 97.2 C309.5 97.5 311.5 99.5 310.8 101.5 C310.3 103 309.3 103.8 308.3 104.1 L308.9 100 Z" fill="#3d7cc9" stroke="none" stroke-width="1" /><rect x="295" y="105" width="16" height="4" fill="#ffff00" stroke="none" stroke-width="1" /><path d="M317 100h5l-2.5 2.7z" fill="#6a6a6a"/><path d="M333.5 105 L337.2 95.3 L340.8 105 M335 102 H339.5" fill="none" stroke="#555" stroke-width="1.7" /><rect x="329" y="105" width="16" height="4" fill="#ff0000" stroke="none" stroke-width="1" /><path d="M351 100h5l-2.5 2.7z" fill="#6a6a6a"/><path d="M353.5 135.5V129.5H359.5" fill="none" stroke="#8a8a8a" stroke-width="1" /><path d="M355.5 131.5L359.5 135.5M356.5 135.5H359.5V132.5" fill="none" stroke="#8a8a8a" stroke-width="1" /><rect x="373" y="62" width="14" height="1" fill="#6d6d6d" stroke="none" stroke-width="1" /><rect x="374" y="65" width="12" height="1" fill="#6d6d6d" stroke="none" stroke-width="1" /><rect x="373" y="68" width="14" height="1" fill="#6d6d6d" stroke="none" stroke-width="1" /><rect x="395" y="66" width="14" height="1" fill="#6d6d6d" stroke="none" stroke-width="1" /><rect x="396" y="69" width="12" height="1" fill="#6d6d6d" stroke="none" stroke-width="1" /><rect x="395" y="72" width="14" height="1" fill="#6d6d6d" stroke="none" stroke-width="1" /><rect x="417" y="71" width="14" height="1" fill="#666" stroke="none" stroke-width="1" /><rect x="418" y="74" width="12" height="1" fill="#666" stroke="none" stroke-width="1" /><rect x="417" y="77" width="14" height="1" fill="#666" stroke="none" stroke-width="1" /><path d="M453.5 76.5 L462.5 67.5" fill="none" stroke="#6d6d6d" stroke-width="1.1" /><path d="M459 66.5 H463.5 V71" fill="none" stroke="#6d6d6d" stroke-width="1.1" /><path d="M467 69h5l-2.5 2.7z" fill="#6d6d6d"/><rect x="500.5" y="62.5" width="9.5" height="4" fill="none" stroke="#6d6d6d" stroke-width="1.1" /><rect x="500.5" y="69.5" width="9.5" height="7" fill="none" stroke="#6d6d6d" stroke-width="1.1" /><rect x="502" y="64" width="12" height="1" fill="#3d7cc9" stroke="none" stroke-width="1" /><rect x="502" y="71" width="6" height="1" fill="#3d7cc9" stroke="none" stroke-width="1" /><rect x="502" y="73" width="6" height="1" fill="#3d7cc9" stroke="none" stroke-width="1" /><path d="M514.5 66.5 C514.5 69 513.5 70.3 510.5 70.3" fill="none" stroke="#3d7cc9" stroke-width="1.2" /><path d="M512.3 68.3 L510.3 70.3 L512.3 72.3" fill="none" stroke="#3d7cc9" stroke-width="1.2" /><rect x="373" y="96" width="14" height="1" fill="#6d6d6d" stroke="none" stroke-width="1" /><rect x="373" y="99" width="10" height="1" fill="#6d6d6d" stroke="none" stroke-width="1" /><rect x="373" y="102" width="14" height="1" fill="#6d6d6d" stroke="none" stroke-width="1" /><rect x="373" y="105" width="10" height="1" fill="#6d6d6d" stroke="none" stroke-width="1" /><rect x="395" y="96" width="14" height="1" fill="#6d6d6d" stroke="none" stroke-width="1" /><rect x="397" y="99" width="10" height="1" fill="#6d6d6d" stroke="none" stroke-width="1" /><rect x="395" y="102" width="14" height="1" fill="#6d6d6d" stroke="none" stroke-width="1" /><rect x="397" y="105" width="10" height="1" fill="#6d6d6d" stroke="none" stroke-width="1" /><rect x="417" y="96" width="14" height="1" fill="#6d6d6d" stroke="none" stroke-width="1" /><rect x="421" y="99" width="10" height="1" fill="#6d6d6d" stroke="none" stroke-width="1" /><rect x="417" y="102" width="14" height="1" fill="#6d6d6d" stroke="none" stroke-width="1" /><rect x="421" y="105" width="10" height="1" fill="#6d6d6d" stroke="none" stroke-width="1" /><rect x="449" y="96" width="4" height="1" fill="#6d6d6d" stroke="none" stroke-width="1" /><rect x="454" y="96" width="9" height="1" fill="#6d6d6d" stroke="none" stroke-width="1" /><rect x="454" y="99" width="9" height="1" fill="#6d6d6d" stroke="none" stroke-width="1" /><rect x="454" y="102" width="6" height="1" fill="#6d6d6d" stroke="none" stroke-width="1" /><rect x="449" y="105" width="4" height="1" fill="#6d6d6d" stroke="none" stroke-width="1" /><rect x="454" y="105" width="9" height="1" fill="#6d6d6d" stroke="none" stroke-width="1" /><path d="M447 101 L450.5 98 V100 H454 V102 H450.5 V104 Z" fill="#3d7cc9" stroke="none" stroke-width="1" /><rect x="471" y="96" width="4" height="1" fill="#6d6d6d" stroke="none" stroke-width="1" /><rect x="476" y="96" width="9" height="1" fill="#6d6d6d" stroke="none" stroke-width="1" /><rect x="476" y="99" width="9" height="1" fill="#6d6d6d" stroke="none" stroke-width="1" /><rect x="476" y="102" width="6" height="1" fill="#6d6d6d" stroke="none" stroke-width="1" /><rect x="471" y="105" width="4" height="1" fill="#6d6d6d" stroke="none" stroke-width="1" /><rect x="476" y="105" width="9" height="1" fill="#6d6d6d" stroke="none" stroke-width="1" /><path d="M476 101 L472.5 98 V100 H469 V102 H472.5 V104 Z" fill="#3d7cc9" stroke="none" stroke-width="1" /><rect x="500.5" y="93.5" width="14" height="14" fill="none" stroke="#6d6d6d" stroke-width="1.1" /><rect x="501" y="96" width="13" height="1" fill="#6d6d6d" stroke="none" stroke-width="1" /><rect x="501" y="104" width="13" height="1" fill="#6d6d6d" stroke="none" stroke-width="1" /><rect x="507" y="94" width="1" height="2" fill="#6d6d6d" stroke="none" stroke-width="1" /><rect x="507" y="105" width="1" height="2" fill="#6d6d6d" stroke="none" stroke-width="1" /><path d="M503 100.5 H512 M504.8 98.5 L502.8 100.5 L504.8 102.5 M510.2 98.5 L512.2 100.5 L510.2 102.5" fill="none" stroke="#3d7cc9" stroke-width="1.1" /><path d="M613.5 100h5l-2.5 2.7z" fill="#6a6a6a"/><path d="M617.5 135.5V129.5H623.5" fill="none" stroke="#8a8a8a" stroke-width="1" /><path d="M619.5 131.5L623.5 135.5M620.5 135.5H623.5V132.5" fill="none" stroke="#8a8a8a" stroke-width="1" /><path d="M754 69h5l-2.5 2.7z" fill="#555"/><path d="M636.8 93.8 H651.2 V101.2 H636.8 Z" fill="#fff" stroke="#3d7cc9" stroke-width="1.6" /><path d="M636 93 h3 l-3 3z M652 93 h-3 l3 3z M636 102 h3 l-3 -3z" fill="#3d7cc9" stroke="none" stroke-width="1" /><circle cx="643.7" cy="97.5" r="2" fill="#3d7cc9"/><rect x="644.5" y="96.5" width="1.5" height="1" fill="#fff" stroke="none" stroke-width="1" /><ellipse cx="648.5" cy="100.3" rx="3.4" ry="1.5" fill="#e6b65c" stroke="#fff" stroke-width="0.7"/><ellipse cx="648.5" cy="102.5" rx="3.4" ry="1.5" fill="#e6b65c" stroke="#fff" stroke-width="0.7"/><ellipse cx="648.5" cy="104.7" rx="3.4" ry="1.5" fill="#e6b65c" stroke="#fff" stroke-width="0.7"/><ellipse cx="643.3" cy="105.2" rx="3.4" ry="1.5" fill="#e6b65c" stroke="#fff" stroke-width="0.7"/><ellipse cx="643.3" cy="107.4" rx="3.4" ry="1.5" fill="#e6b65c" stroke="#fff" stroke-width="0.7"/><path d="M658 100h5l-2.5 3z" fill="#6a6a6a"/><circle cx="700" cy="99.3" r="1.8" fill="#555"/><path d="M701.6 99.5 C701.6 101.5 700.2 103 697.5 103.8" fill="none" stroke="#555" stroke-width="1.6" /><path d="M723.5 97.5 H729.5 M725.8 95.2 L723.5 97.5 L725.8 99.8" fill="none" stroke="#3d7cc9" stroke-width="1.2" /><rect x="731" y="98.6" width="1.2" height="1.2" fill="#555" stroke="none" stroke-width="1" /><ellipse cx="735.3" cy="97.2" rx="1.55" ry="2.4" fill="none" stroke="#555" stroke-width="1"/><rect x="726" y="105.8" width="1.2" height="1.2" fill="#555" stroke="none" stroke-width="1" /><ellipse cx="729.8" cy="104.3" rx="1.55" ry="2.4" fill="none" stroke="#555" stroke-width="1"/><ellipse cx="734.8" cy="104.3" rx="1.55" ry="2.4" fill="none" stroke="#555" stroke-width="1"/><rect x="747.7" y="98.6" width="1.2" height="1.2" fill="#555" stroke="none" stroke-width="1" /><ellipse cx="751.5" cy="97.2" rx="1.55" ry="2.4" fill="none" stroke="#555" stroke-width="1"/><ellipse cx="756.5" cy="97.2" rx="1.55" ry="2.4" fill="none" stroke="#555" stroke-width="1"/><path d="M745.5 104.3 H751.5 M749.2 102 L751.5 104.3 L749.2 106.6" fill="none" stroke="#3d7cc9" stroke-width="1.2" /><rect x="752.8" y="105.8" width="1.2" height="1.2" fill="#555" stroke="none" stroke-width="1" /><ellipse cx="756.8" cy="104.3" rx="1.55" ry="2.4" fill="none" stroke="#555" stroke-width="1"/><path d="M757.5 135.5V129.5H763.5" fill="none" stroke="#8a8a8a" stroke-width="1" /><path d="M759.5 131.5L763.5 135.5M760.5 135.5H763.5V132.5" fill="none" stroke="#8a8a8a" stroke-width="1" /><line x1="795.5" y1="56" x2="795.5" y2="81" stroke="#7a7a7a" stroke-width="1.3"/><line x1="802.5" y1="56" x2="802.5" y2="81" stroke="#7a7a7a" stroke-width="1.3"/><line x1="809" y1="56" x2="809" y2="81" stroke="#7a7a7a" stroke-width="1.3"/><line x1="815.5" y1="56" x2="815.5" y2="81" stroke="#7a7a7a" stroke-width="1.3"/><line x1="822.5" y1="56" x2="822.5" y2="81" stroke="#7a7a7a" stroke-width="1.3"/><line x1="795" y1="56.5" x2="823" y2="56.5" stroke="#7a7a7a" stroke-width="1.3"/><line x1="795" y1="62.5" x2="823" y2="62.5" stroke="#7a7a7a" stroke-width="1.3"/><line x1="795" y1="68.5" x2="823" y2="68.5" stroke="#7a7a7a" stroke-width="1.3"/><line x1="795" y1="74.5" x2="823" y2="74.5" stroke="#7a7a7a" stroke-width="1.3"/><line x1="795" y1="80.5" x2="823" y2="80.5" stroke="#7a7a7a" stroke-width="1.3"/><rect x="803" y="57.2" width="6.3" height="4.6" fill="#e05c35" stroke="none" stroke-width="1" /><rect x="803" y="63.2" width="11.3" height="4.6" fill="#3d7cc9" stroke="none" stroke-width="1" /><rect x="803" y="69.2" width="9.2" height="4.6" fill="#e05c35" stroke="none" stroke-width="1" /><rect x="803" y="75.2" width="4" height="4.6" fill="#3d7cc9" stroke="none" stroke-width="1" /><rect x="808.5" y="72.5" width="16" height="13" fill="#fff" stroke="#7a7a7a" stroke-width="1.1" /><path d="M812.8 77.5 H820.5 M812.8 80.5 H820.5 M818.8 75.2 L814.3 83.8" fill="none" stroke="#333" stroke-width="1.05" /><path d="M837.5 111.3h4.5l-2.25 2.5z" fill="#6a6a6a"/><rect x="866.5" y="64" width="18" height="14.5" fill="#c5d9f1" stroke="none" stroke-width="1" /><rect x="860.5" y="58.5" width="6" height="20" fill="#fff" stroke="none" stroke-width="1" /><rect x="866.5" y="58.5" width="18" height="5.5" fill="#fff" stroke="none" stroke-width="1" /><line x1="860.5" y1="58" x2="860.5" y2="79" stroke="#8a8a8a" stroke-width="1.1"/><line x1="860" y1="58.5" x2="885" y2="58.5" stroke="#8a8a8a" stroke-width="1.1"/><line x1="866.6" y1="58" x2="866.6" y2="79" stroke="#8a8a8a" stroke-width="1.1"/><line x1="860" y1="63.5" x2="885" y2="63.5" stroke="#8a8a8a" stroke-width="1.1"/><line x1="872.7" y1="58" x2="872.7" y2="79" stroke="#8a8a8a" stroke-width="1.1"/><line x1="860" y1="68.5" x2="885" y2="68.5" stroke="#8a8a8a" stroke-width="1.1"/><line x1="878.8" y1="58" x2="878.8" y2="79" stroke="#8a8a8a" stroke-width="1.1"/><line x1="860" y1="73.5" x2="885" y2="73.5" stroke="#8a8a8a" stroke-width="1.1"/><line x1="884.9" y1="58" x2="884.9" y2="79" stroke="#8a8a8a" stroke-width="1.1"/><line x1="860" y1="78.5" x2="885" y2="78.5" stroke="#8a8a8a" stroke-width="1.1"/><path d="M875.8 78.6 L889.8 62.6 V69.6 L879.6 81.2 Z" fill="#7a7a7a" stroke="#fff" stroke-width="1.2" /><path d="M880.2 73.5 L884.2 77.3" fill="none" stroke="#fff" stroke-width="1.1" /><path d="M866.5 86 C870 82 873 78 877.5 77 C880 77 881 79.5 879.5 82 C877 85.5 871 86 866.5 86 Z" fill="#3d7cc9" stroke="#fff" stroke-width="0.8" /><path d="M875.5 80.5 C876.5 79 878 79 878.3 80.3" fill="none" stroke="#fff" stroke-width="1" /><path d="M886 111.3h4.5l-2.25 2.5z" fill="#6a6a6a"/><path d="M1440.5 67 L1443 64 L1445.5 67 Z" fill="#c6c6c6" stroke="none" stroke-width="1" /><path d="M1440.5 84h5l-2.5 3z" fill="#6a6a6a"/><rect x="1440.5" y="101" width="5" height="1" fill="#6a6a6a" stroke="none" stroke-width="1" /><path d="M1440.5 104h5l-2.5 3z" fill="#6a6a6a"/><rect x="1470.5" y="56.5" width="7" height="5" fill="#fff" stroke="#6d6d6d" stroke-width="1" /><rect x="1477.5" y="56.5" width="7" height="5" fill="#fff" stroke="#6d6d6d" stroke-width="1" /><rect x="1481.5" y="64.5" width="7" height="5" fill="#c5d9f1" stroke="#6d6d6d" stroke-width="1" /><rect x="1488.5" y="64.5" width="7" height="5" fill="#c5d9f1" stroke="#6d6d6d" stroke-width="1" /><path d="M1471 67 L1474 64.5 V66.2 H1478 V67.8 H1474 V69.5 Z" fill="#3d7cc9" stroke="none" stroke-width="1" /><rect x="1470.5" y="72.5" width="7" height="5" fill="#fff" stroke="#6d6d6d" stroke-width="1" /><rect x="1477.5" y="72.5" width="7" height="5" fill="#fff" stroke="#6d6d6d" stroke-width="1" /><rect x="1470.5" y="77.5" width="7" height="5" fill="#fff" stroke="#6d6d6d" stroke-width="1" /><rect x="1477.5" y="77.5" width="7" height="5" fill="#fff" stroke="#6d6d6d" stroke-width="1" /><path d="M1479.7 111.3h5l-2.5 2.7z" fill="#6a6a6a"/><rect x="1511.5" y="56.5" width="7" height="5" fill="#fff" stroke="#6d6d6d" stroke-width="1" /><rect x="1518.5" y="56.5" width="7" height="5" fill="#fff" stroke="#6d6d6d" stroke-width="1" /><rect x="1517.5" y="64.5" width="7" height="5" fill="#c5d9f1" stroke="#6d6d6d" stroke-width="1" /><path d="M1524.5 64.5 L1529 67 L1524.5 69.5 Z" fill="#c5d9f1" stroke="none" stroke-width="1" /><rect x="1511.5" y="73.5" width="7" height="5" fill="#fff" stroke="#6d6d6d" stroke-width="1" /><rect x="1518.5" y="73.5" width="7" height="5" fill="#fff" stroke="#6d6d6d" stroke-width="1" /><rect x="1511.5" y="78.5" width="7" height="5" fill="#fff" stroke="#6d6d6d" stroke-width="1" /><rect x="1518.5" y="78.5" width="7" height="5" fill="#fff" stroke="#6d6d6d" stroke-width="1" /><path d="M1526 62 L1540 74.5 M1540 62 L1526 74.5" fill="none" stroke="#d9532b" stroke-width="2.2" /><path d="M1522 111.3h5l-2.5 2.7z" fill="#6a6a6a"/><path d="M1553.5 55 V59.5 M1575.5 55 V59.5 M1555 57.3 H1574 M1557 55.5 L1555 57.3 L1557 59 M1572 55.5 L1574 57.3 L1572 59" fill="none" stroke="#3d7cc9" stroke-width="1.1" /><rect x="1553.5" y="61.5" width="27" height="20" fill="#fff" stroke="#6d6d6d" stroke-width="1.1" /><line x1="1560.5" y1="61.5" x2="1560.5" y2="81.5" stroke="#a0a0a0" stroke-width="1"/><line x1="1567.5" y1="61.5" x2="1567.5" y2="81.5" stroke="#a0a0a0" stroke-width="1"/><line x1="1574.5" y1="61.5" x2="1574.5" y2="81.5" stroke="#a0a0a0" stroke-width="1"/><line x1="1553.5" y1="66.5" x2="1580.5" y2="66.5" stroke="#a0a0a0" stroke-width="1"/><line x1="1553.5" y1="76.5" x2="1580.5" y2="76.5" stroke="#a0a0a0" stroke-width="1"/><rect x="1561" y="67" width="7" height="9.5" fill="#3d7cc9" stroke="none" stroke-width="1" /><path d="M1553.5 81.5 V85.5 H1562 L1564 83 L1566 85.5 H1570 L1573.5 81.5" fill="none" stroke="#6d6d6d" stroke-width="1.1" /><path d="M1564.6 111.3h5l-2.5 2.7z" fill="#6a6a6a"/><path d="M1601 54 H1616 V57.5 H1614.6 V56 H1604.6 L1610.2 61.4 L1604.6 66.8 H1614.6 V65.3 H1616 V68.8 H1601 V67.5 L1607.3 61.4 L1601 55.3 Z" fill="#444" stroke="none" stroke-width="1" /><path d="M1680 61.4h5l-2.5 2.5z" fill="#6a6a6a"/><rect x="1602.5" y="77.5" width="13" height="15" fill="#fff" stroke="#6d6d6d" stroke-width="1.1" /><rect x="1602" y="77" width="14" height="3.3" fill="#6d6d6d" stroke="none" stroke-width="1" /><path d="M1609 82.5 V90 M1605.5 86.5 L1609 90 L1612.5 86.5" fill="none" stroke="#3d7cc9" stroke-width="2" /><path d="M1638 84.3h5l-2.5 2.6z" fill="#6a6a6a"/><path d="M1602.5 108.5 L1610 101 L1615 106 L1607.5 113.5 Z" fill="#e8839a" stroke="none" stroke-width="1" /><path d="M1602.5 108.5 L1605 106 L1610 111 L1607.5 113.5 Z" fill="#f0b4c2" stroke="none" stroke-width="1" /><rect x="1607" y="112.5" width="9" height="1.1" fill="#6d6d6d" stroke="none" stroke-width="1" /><path d="M1650 107h5l-2.5 2.7z" fill="#6a6a6a"/><path d="M1697 68.8 L1701.5 57.3 L1706 68.8 M1698.6 65 H1704.4" fill="none" stroke="#3d7cc9" stroke-width="1.8" /><path d="M1697.5 72 H1705.5 L1698 81.8 H1706" fill="none" stroke="#8c52c6" stroke-width="1.7" /><path d="M1708 64 H1725 V65.5 L1718 72 V78.7 H1715 V72 L1708 65.5 Z" fill="#6d6d6d" stroke="none" stroke-width="1" /><path d="M1710 65.3 L1716 71 V77.5" fill="none" stroke="#fff" stroke-width="0.9" /><path d="M1723 111.3h5l-2.5 2.5z" fill="#6a6a6a"/><path d="M1741 81 V70.5 H1743 V66.3 H1745 V61.3 H1747 V58 H1751 V61.3 H1753 V66.5 H1756 V61.3 H1758 V58 H1762 V61.3 H1764 V66.3 H1766 V70.5 H1767 V81 H1756 V71 H1752 V81 Z" fill="#6d6d6d" stroke="none" stroke-width="1" /><line x1="1742" y1="71.5" x2="1742" y2="80" stroke="#fff" stroke-width="0.9"/><line x1="1744" y1="67.3" x2="1744" y2="70" stroke="#fff" stroke-width="0.9"/><line x1="1746" y1="62.3" x2="1746" y2="66" stroke="#fff" stroke-width="0.9"/><line x1="1748.3" y1="59" x2="1748.3" y2="61" stroke="#fff" stroke-width="0.9"/><line x1="1766" y1="71.5" x2="1766" y2="80" stroke="#fff" stroke-width="0.9"/><line x1="1764" y1="67.3" x2="1764" y2="70" stroke="#fff" stroke-width="0.9"/><line x1="1762" y1="62.3" x2="1762" y2="66" stroke="#fff" stroke-width="0.9"/><line x1="1759.7" y1="59" x2="1759.7" y2="61" stroke="#fff" stroke-width="0.9"/><rect x="1753.3" y="68" width="2.4" height="1" fill="#fff" stroke="none" stroke-width="1" /><path d="M1768 111.3h5l-2.5 2.5z" fill="#6a6a6a"/><path d="M93 161h7l-3.5 4z" fill="#6a6a6a"/><path d="M148 171 C151 165 156 160 164.5 157.5" fill="none" stroke="#c8c8c8" stroke-width="2.6" /><path d="M148.5 157.5 L164.5 171.5" fill="none" stroke="#c8c8c8" stroke-width="1.8" /><path d="M183.5 165 L190 171.5 L200.5 158" fill="none" stroke="#c8c8c8" stroke-width="3" /><path d="M219 173.2 C220.3 175 222 174.3 222.7 171.5 L226.3 157 C227 154.3 228.8 153.5 231.2 154.2" fill="none" stroke="#666" stroke-width="1.9" /><circle cx="219.2" cy="173.3" r="1.3" fill="#666"/><circle cx="231.2" cy="154.6" r="1.3" fill="#666"/><path d="M222.3 160.3 H228.3" fill="none" stroke="#666" stroke-width="1.3" /><path d="M228.3 163 C230 162.3 231 163.2 231.5 165 L233 169.3 C233.6 171.2 234.8 171.3 236.2 170.2" fill="none" stroke="#666" stroke-width="1.6" /><path d="M236 162.8 C234.5 162.8 233.5 163.5 232 165.5 L230.3 168 C229.5 169.5 228.5 171 227.5 170.8" fill="none" stroke="#666" stroke-width="1.5" /></svg>
</body></html>
